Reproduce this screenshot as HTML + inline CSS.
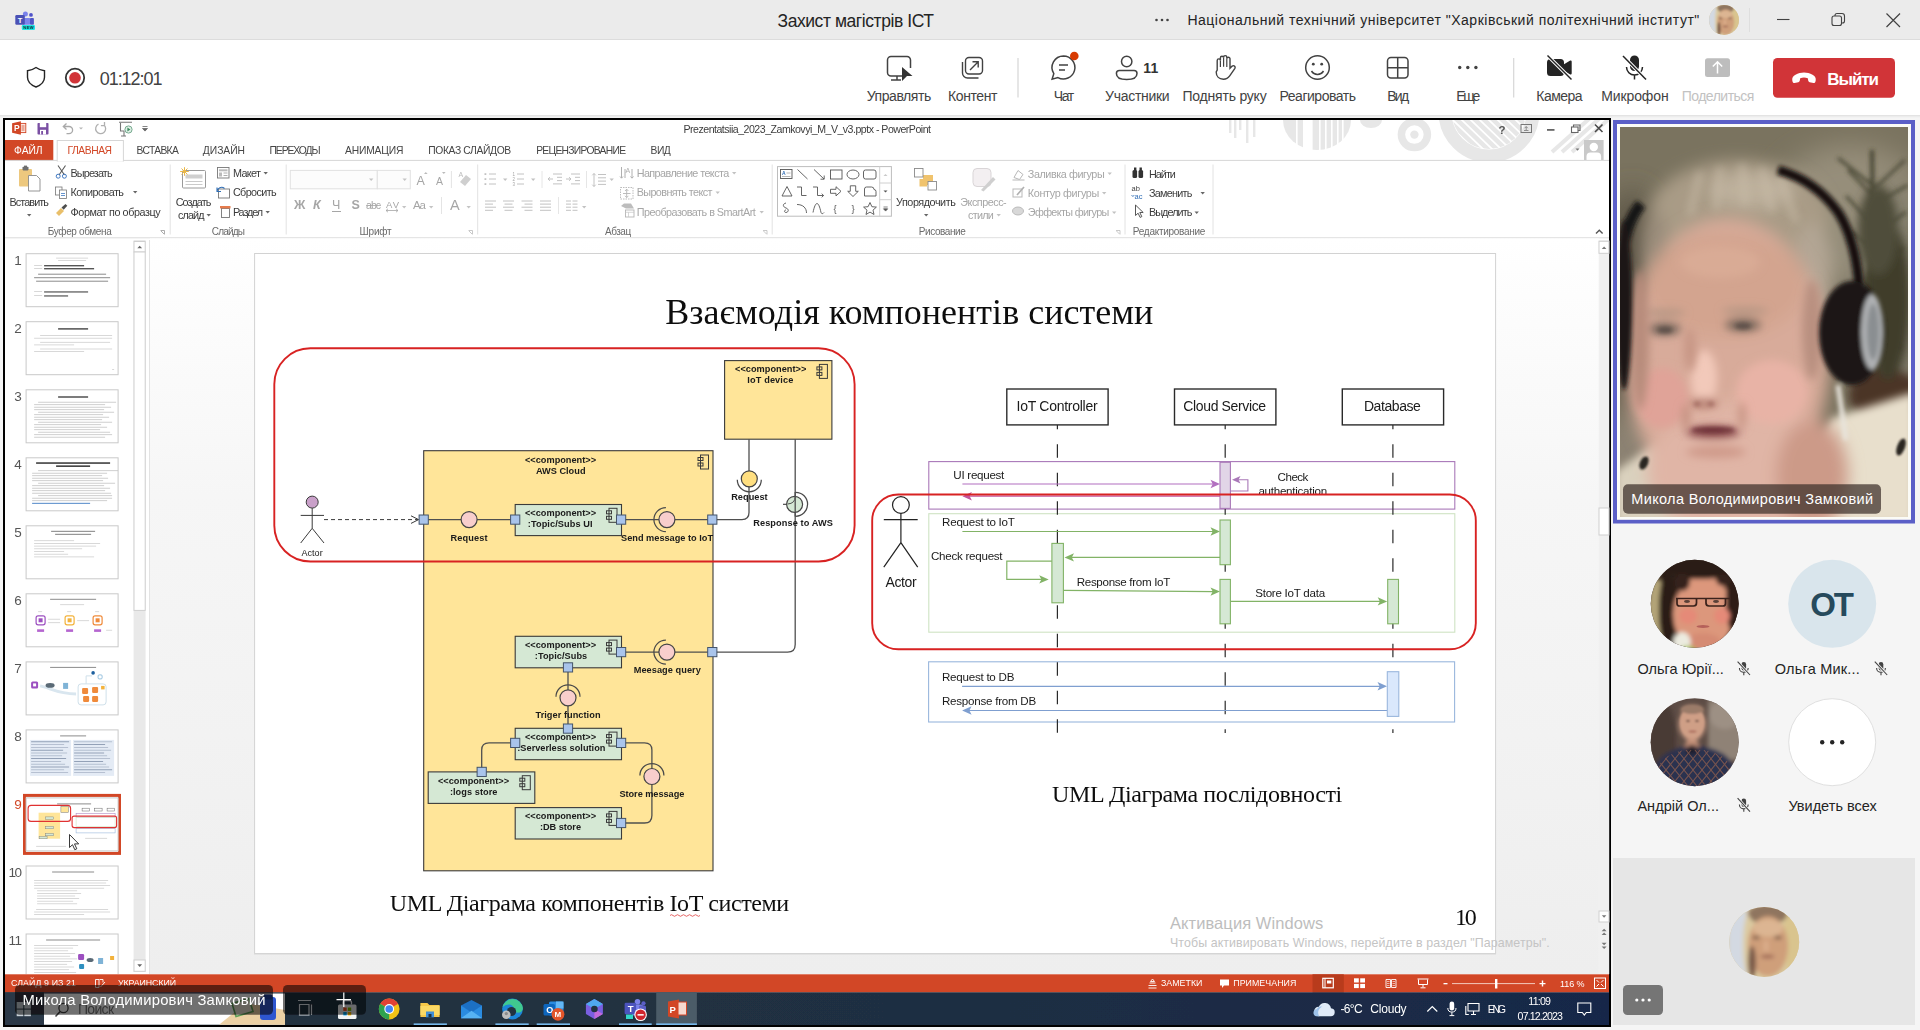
<!DOCTYPE html>
<html lang="uk"><head><meta charset="utf-8"><title>Захист магістрів ІСТ</title>
<style>
html,body{margin:0;padding:0;background:#f5f5f5;overflow:hidden}
svg{display:block;font-family:"Liberation Sans","Noto Sans CJK SC",sans-serif}
text{white-space:pre}
</style></head><body>
<svg width="1920" height="1030" viewBox="0 0 1920 1030">
<defs>
<filter id="b1" x="-20%" y="-20%" width="140%" height="140%"><feGaussianBlur stdDeviation="1"/></filter>
<filter id="b2" x="-20%" y="-20%" width="140%" height="140%"><feGaussianBlur stdDeviation="2"/></filter>
<filter id="b4" x="-20%" y="-20%" width="140%" height="140%"><feGaussianBlur stdDeviation="4"/></filter>
<filter id="b8" x="-30%" y="-30%" width="160%" height="160%"><feGaussianBlur stdDeviation="8"/></filter>
<filter id="b14" x="-40%" y="-40%" width="180%" height="180%"><feGaussianBlur stdDeviation="14"/></filter>
<filter id="b03" x="0" y="0" width="100%" height="100%"><feGaussianBlur stdDeviation="0.35"/></filter>
<filter id="b05" x="-5%" y="-5%" width="110%" height="110%"><feGaussianBlur stdDeviation="0.45"/></filter>
<clipPath id="cpHdr"><circle cx="1724" cy="20" r="15"/></clipPath>
<clipPath id="cpVid"><rect x="1620" y="127" width="288" height="390"/></clipPath>
<clipPath id="cpA1"><circle cx="1694.7" cy="603.8" r="44"/></clipPath>
<clipPath id="cpA3"><circle cx="1694.7" cy="742.2" r="44"/></clipPath>
<clipPath id="cpShirt"><ellipse cx="1694.5" cy="774" rx="38" ry="25"/></clipPath>
<clipPath id="cpRing"><circle cx="1489" cy="112" r="37"/></clipPath>
<clipPath id="cpDecor"><rect x="5" y="120" width="1604" height="40"/></clipPath>
<clipPath id="cpSelf"><circle cx="1764.2" cy="941.9" r="35"/></clipPath>
<clipPath id="cpShare"><rect x="5" y="120" width="1604" height="905"/></clipPath>
<clipPath id="cpThumbs"><rect x="5" y="240" width="145" height="734"/></clipPath>
</defs>
<g id="s1_teams">
<rect x="0.0" y="0.0" width="1920.0" height="1030.0" fill="#f5f5f5"/>
<rect x="0.0" y="0.0" width="1920.0" height="40.0" fill="#ebebeb"/>
<rect x="0.0" y="39.0" width="1920.0" height="1.0" fill="#dcdcdc"/>
<rect x="0.0" y="40.0" width="1920.0" height="75.0" fill="#ffffff"/>
<rect x="0.0" y="115.0" width="1920.0" height="1.0" fill="#e3e3e3"/>
<rect x="0.0" y="116.0" width="1920.0" height="1.0" fill="#ececec"/>
<rect x="0.0" y="117.0" width="1920.0" height="1.0" fill="#f2f2f2"/>
<g><circle cx="25.4" cy="14.1" r="2.5" fill="#7b83eb"/>
<circle cx="31.0" cy="14.9" r="1.9" fill="#4f52c9"/>
<rect x="23.0" y="18.1" width="7.2" height="6.6" fill="#7b83eb" rx="0.8"/>
<rect x="30.0" y="18.1" width="3.9" height="6.6" fill="#4f56c8" rx="0.8"/>
<rect x="15.3" y="15.0" width="9.5" height="9.7" fill="#4a51b5" rx="1.2"/>
<text x="17.8" y="22.8" fill="#ffffff" style="font-size:7.5px;font-weight:700;">T</text>
<rect x="21.8" y="25.1" width="13.2" height="4.8" fill="#20e6e6" rx="1.2"/>
<text x="23.2" y="29.1" fill="#06302f" style="font-size:4.2px;font-weight:700;" textLength="10.6" lengthAdjust="spacing">NEW</text>
</g><text x="777.5" y="26.7" fill="#242424" style="font-size:17.5px;" textLength="156.5" lengthAdjust="spacing">Захист магістрів ІСТ</text>
<circle cx="1156.5" cy="20.0" r="1.3" fill="#424242"/>
<circle cx="1162.0" cy="20.0" r="1.3" fill="#424242"/>
<circle cx="1167.5" cy="20.0" r="1.3" fill="#424242"/>
<text x="1187.4" y="24.5" fill="#242424" style="font-size:14px;" textLength="511.9" lengthAdjust="spacing">Національний технічний університет "Харківський політехнічний інститут"</text>
<line x1="1777.0" y1="19.5" x2="1789.5" y2="19.5" stroke="#424242" stroke-width="1.1"/>
<rect x="1832.0" y="16.0" width="9.5" height="9.5" fill="none" stroke="#424242" stroke-width="1.1" rx="2"/>
<path d="M1835 16 v-0.5 a2 2 0 0 1 2 -2 h5 a2.5 2.5 0 0 1 2.5 2.5 v5 a2 2 0 0 1 -2 2 h-1" fill="none" stroke="#424242" stroke-width="1.1"/>
<path d="M1886.5 13.5 L1900 27 M1900 13.5 L1886.5 27" fill="none" stroke="#424242" stroke-width="1.2"/>
<line x1="1749.5" y1="8.0" x2="1749.5" y2="32.0" stroke="#dedede" stroke-width="1"/>
<path d="M36 67.5 c3 2.2 5.5 3 8.5 3.2 v6.5 c0 5 -4 8 -8.5 9.8 c-4.5 -1.8 -8.5 -4.8 -8.5 -9.8 v-6.5 c3 -0.2 5.5 -1 8.5 -3.2 z" fill="none" stroke="#242424" stroke-width="1.4"/>
<circle cx="75.0" cy="77.8" r="9.2" fill="none" stroke="#333" stroke-width="1.8"/>
<circle cx="75.0" cy="77.8" r="5.8" fill="#d13438"/>
<text x="99.7" y="84.5" fill="#424242" style="font-size:18px;" textLength="62.8" lengthAdjust="spacing">01:12:01</text>
<text x="866.7" y="100.8" fill="#424242" style="font-size:14px;" textLength="64.6" lengthAdjust="spacing">Управлять</text>
<text x="948.0" y="100.8" fill="#424242" style="font-size:14px;" textLength="49.5" lengthAdjust="spacing">Контент</text>
<text x="1053.7" y="100.8" fill="#424242" style="font-size:14px;" textLength="20.5" lengthAdjust="spacing">Чат</text>
<text x="1105.0" y="100.8" fill="#424242" style="font-size:14px;" textLength="64.7" lengthAdjust="spacing">Участники</text>
<text x="1182.5" y="100.8" fill="#424242" style="font-size:14px;" textLength="84.2" lengthAdjust="spacing">Поднять руку</text>
<text x="1279.5" y="100.8" fill="#424242" style="font-size:14px;" textLength="76.5" lengthAdjust="spacing">Реагировать</text>
<text x="1387.2" y="100.8" fill="#424242" style="font-size:14px;" textLength="22.0" lengthAdjust="spacing">Вид</text>
<text x="1456.2" y="100.8" fill="#424242" style="font-size:14px;" textLength="24.1" lengthAdjust="spacing">Еще</text>
<text x="1536.3" y="100.8" fill="#424242" style="font-size:14px;" textLength="46.2" lengthAdjust="spacing">Камера</text>
<text x="1601.2" y="100.8" fill="#424242" style="font-size:14px;" textLength="67.5" lengthAdjust="spacing">Микрофон</text>
<text x="1681.7" y="100.8" fill="#c2c2c2" style="font-size:14px;" textLength="72.7" lengthAdjust="spacing">Поделиться</text>
<line x1="1018.0" y1="58.0" x2="1018.0" y2="97.5" stroke="#d6d6d6" stroke-width="1.2"/>
<line x1="1513.7" y1="58.0" x2="1513.7" y2="97.5" stroke="#d6d6d6" stroke-width="1.2"/>
<path d="M905 76 h-14 a3.5 3.5 0 0 1 -3.5 -3.5 v-12.5 a3.5 3.5 0 0 1 3.5 -3.5 h16 a3.5 3.5 0 0 1 3.5 3.5 v8" fill="none" stroke="#424242" stroke-width="1.5"/>
<path d="M897 76 v3.5 M891 80 h10" fill="none" stroke="#424242" stroke-width="1.5"/>
<path d="M902 67 l10.5 9 h-5.5 l-5 5 z" fill="#333"/>
<rect x="965.5" y="57.5" width="17.0" height="16.5" fill="none" stroke="#424242" stroke-width="1.4" rx="3.5"/>
<path d="M962.5 62 v11 a5 5 0 0 0 5 5 h11" fill="none" stroke="#424242" stroke-width="1.4"/>
<path d="M970 70 l8 -8 M972.5 61.8 h5.7 v5.7" fill="none" stroke="#424242" stroke-width="1.4"/>
<path d="M1063.5 56 a11.5 11.5 0 1 1 -5.6 21.6 l-5.8 1.6 l1.7 -5.6 a11.5 11.5 0 0 1 9.7 -17.6 z" fill="none" stroke="#424242" stroke-width="1.5"/>
<path d="M1059 65 h9 M1059 70 h6" fill="none" stroke="#424242" stroke-width="1.5"/>
<circle cx="1074.3" cy="56.0" r="4.3" fill="#d83b01"/>
<circle cx="1126.7" cy="61.5" r="5.2" fill="none" stroke="#424242" stroke-width="1.5"/>
<path d="M1119.5 70.5 h14.5 a3 3 0 0 1 3 3 c0 4 -4 6 -10.3 6 c-6.3 0 -10.3 -2 -10.3 -6 a3 3 0 0 1 3 -3 z" fill="none" stroke="#424242" stroke-width="1.5"/>
<text x="1143.3" y="72.6" fill="#333" style="font-size:14px;font-weight:700;" textLength="15.0" lengthAdjust="spacing">11</text>
<path d="M1217.2 70 v-9.5 a1.6 1.6 0 0 1 3.2 0 v-2.7 a1.6 1.6 0 0 1 3.2 0 v-0.6 a1.6 1.6 0 0 1 3.2 0 v1.6 a1.6 1.6 0 0 1 3.2 0 v9.5 l2.2 -2.2 a1.8 1.8 0 0 1 2.7 2.3 l-5.2 7.5 c-1.6 2.3 -3.6 3.3 -6.3 3.3 c-4.2 0 -7.2 -2.6 -7.2 -7.2 z" fill="none" stroke="#424242" stroke-width="1.4"/>
<path d="M1220.4 60.5 v6.5 M1223.6 57.8 v9 M1226.8 58.8 v8.2" fill="none" stroke="#424242" stroke-width="1.2"/>
<circle cx="1317.5" cy="67.5" r="11.8" fill="none" stroke="#424242" stroke-width="1.5"/>
<circle cx="1313.3" cy="64.2" r="1.4" fill="#424242"/>
<circle cx="1321.7" cy="64.2" r="1.4" fill="#424242"/>
<path d="M1311.5 71 a7 7 0 0 0 12 0" fill="none" stroke="#424242" stroke-width="1.5"/>
<rect x="1387.5" y="57.5" width="20.5" height="20.5" fill="none" stroke="#424242" stroke-width="1.5" rx="3.5"/>
<path d="M1397.7 57.5 v20.5 M1387.5 67.7 h20.5" fill="none" stroke="#424242" stroke-width="1.5"/>
<circle cx="1459.7" cy="67.5" r="1.7" fill="#424242"/>
<circle cx="1467.8" cy="67.5" r="1.7" fill="#424242"/>
<circle cx="1475.9" cy="67.5" r="1.7" fill="#424242"/>
<path d="M1550.5 59 h10 a3.5 3.5 0 0 1 3.5 3.5 v1.8 l5.8 -3.6 a1.2 1.2 0 0 1 1.9 1 v11.6 a1.2 1.2 0 0 1 -1.9 1 l-5.8 -3.6 v1.8 a3.5 3.5 0 0 1 -3.5 3.5 h-10 a3.5 3.5 0 0 1 -3.5 -3.5 v-10 a3.5 3.5 0 0 1 3.5 -3.5 z" fill="#242424"/>
<path d="M1547.5 55.5 L1571.5 79.5" fill="none" stroke="#fff" stroke-width="3.4"/>
<path d="M1547.5 55.5 L1571.5 79.5" fill="none" stroke="#242424" stroke-width="1.5"/>
<rect x="1630.0" y="55.5" width="9.0" height="15.5" fill="#242424" rx="4.5"/>
<path d="M1626.5 67 a8 8 0 0 0 16 0 M1634.5 75 v4.5" fill="none" stroke="#242424" stroke-width="1.5"/>
<path d="M1623 56 L1646 79.5" fill="none" stroke="#fff" stroke-width="3.4"/>
<path d="M1623 56 L1646 79.5" fill="none" stroke="#242424" stroke-width="1.5"/>
<rect x="1705.0" y="58.2" width="25.0" height="18.7" fill="#bdbdbd" rx="2.5"/>
<path d="M1717.5 73.5 v-11.5 M1712.8 66.5 l4.7 -4.7 l4.7 4.7" fill="none" stroke="#fff" stroke-width="1.5"/>
<rect x="1773.0" y="58.0" width="122.0" height="39.8" fill="#d13438" rx="4.5"/>
<path d="M1792.3 80.5 c-0.6 -2.6 1 -4.6 3.2 -5.8 c5.3 -2.8 11.7 -2.8 17 0 c2.2 1.2 3.8 3.2 3.2 5.8 l-0.3 1.2 c-0.2 0.9 -1.1 1.5 -2 1.3 l-3.7 -0.8 c-0.8 -0.2 -1.4 -0.8 -1.5 -1.6 l-0.4 -2.4 c-2.5 -0.9 -5.1 -0.9 -7.6 0 l-0.4 2.4 c-0.1 0.8 -0.7 1.4 -1.5 1.6 l-3.7 0.8 c-0.9 0.2 -1.8 -0.4 -2 -1.3 z" fill="#fff"/>
<text x="1827.2" y="84.6" fill="#ffffff" style="font-size:17px;font-weight:700;" textLength="51.8" lengthAdjust="spacing">Выйти</text>
<g clip-path="url(#cpHdr)">
<rect x="1708.0" y="4.0" width="32.0" height="32.0" fill="#d9c79c"/>
<g filter="url(#b1)">
<rect x="1708.0" y="4.0" width="7.8" height="32.0" fill="#d3d9e2"/>
<ellipse cx="1725.7" cy="8.4" rx="8.5" ry="4.3" fill="#8f755e"/>
<ellipse cx="1717.2" cy="21.6" rx="2.1" ry="12.8" fill="#dccba2"/>
<ellipse cx="1735.9" cy="19.5" rx="3.8" ry="12.8" fill="#d9c48e"/>
<ellipse cx="1725.7" cy="22.0" rx="8.5" ry="12.8" fill="#cf9f7a"/>
<ellipse cx="1725.7" cy="14.4" rx="6.4" ry="3.8" fill="#dcb592"/>
<ellipse cx="1718.9" cy="28.9" rx="1.7" ry="6.8" fill="#7a5a48"/>
<ellipse cx="1720.6" cy="18.4" rx="1.7" ry="0.8" fill="#7d5e4c"/>
<ellipse cx="1730.0" cy="18.4" rx="1.7" ry="0.8" fill="#7d5e4c"/>
<ellipse cx="1725.5" cy="26.5" rx="3.0" ry="0.8" fill="#9a6452"/>
<ellipse cx="1724.9" cy="22.0" rx="1.1" ry="2.6" fill="#dcae8c"/>
</g>
</g>
</g>
<g id="s2_right">
<rect x="1613.0" y="120.0" width="302.0" height="403.5" fill="#5b5fc7"/>
<rect x="1617.0" y="124.0" width="294.0" height="395.8" fill="#fbfbf6"/>
<g clip-path="url(#cpVid)">
<rect x="1620.0" y="127.0" width="288.0" height="390.0" fill="#7a735f"/>
<g filter="url(#b14)">
<ellipse cx="1850" cy="215" rx="80" ry="70" fill="#968e7a"/>
<ellipse cx="1632" cy="300" rx="30" ry="110" fill="#5a5245"/>
<ellipse cx="1640" cy="470" rx="50" ry="60" fill="#8c8272"/>
<ellipse cx="1890" cy="300" rx="30" ry="120" fill="#7c7868"/>
</g>
<g filter="url(#b2)" opacity="0.9">
<path d="M1872 150 L1874 300" fill="none" stroke="#3d3c2a" stroke-width="4"/>
<path d="M1872 185 L1838 158 M1872 195 L1848 170 M1873 190 L1905 160 M1873 205 L1908 185 M1873 225 L1846 196 M1873 235 L1906 212 M1874 250 L1852 232 M1874 262 L1904 248" fill="none" stroke="#454431" stroke-width="3"/>
<path d="M1874 250 L1864 310 M1874 250 L1884 330 M1876 260 L1898 350 M1874 270 L1878 380" fill="none" stroke="#45442f" stroke-width="7"/>
</g>
<g filter="url(#b4)">
<ellipse cx="1885" cy="395" rx="36" ry="26" fill="#4c3427"/>
<ellipse cx="1888" cy="300" rx="22" ry="80" fill="#3f3d2c"/>
<ellipse cx="1878" cy="230" rx="20" ry="45" fill="#504e3a"/>
</g>
<g filter="url(#b4)">
<path d="M1832 418 L1915 392 L1915 525 L1760 525 Z" fill="#e8dfcc"/>
<path d="M1615 472 L1662 438 L1705 525 L1615 525 Z" fill="#dad1be"/>
</g>
<g filter="url(#b8)">
<ellipse cx="1738" cy="218" rx="90" ry="58" fill="#a99b86"/>
<ellipse cx="1752" cy="190" rx="42" ry="18" fill="#bdb09c"/>
<ellipse cx="1812" cy="275" rx="20" ry="52" fill="#b3a694"/>
<ellipse cx="1655" cy="250" rx="14" ry="40" fill="#9a8c7a"/>
</g>
<g filter="url(#b8)">
<ellipse cx="1727" cy="360" rx="102" ry="142" fill="#d8ab9a"/>
<ellipse cx="1725" cy="285" rx="80" ry="52" fill="#d3a48f"/>
<ellipse cx="1745" cy="470" rx="98" ry="70" fill="#e0b5a6"/>
<ellipse cx="1812" cy="475" rx="36" ry="55" fill="#cc9a88"/>
</g>
<g filter="url(#b4)">
<ellipse cx="1662" cy="398" rx="26" ry="30" fill="#e0a398"/>
<ellipse cx="1772" cy="392" rx="36" ry="32" fill="#e8b3a6"/>
<ellipse cx="1704" cy="378" rx="13" ry="28" fill="#f2c9ba"/>
<ellipse cx="1720" cy="262" rx="40" ry="16" fill="#d9ab95"/>
<ellipse cx="1664" cy="329" rx="17" ry="6.5" fill="#7d6a5e"/>
<ellipse cx="1743" cy="325" rx="18" ry="6.5" fill="#7d6a5e"/>
<ellipse cx="1664" cy="313" rx="21" ry="3.5" fill="#b39482"/>
<ellipse cx="1745" cy="311" rx="23" ry="3.5" fill="#b39482"/>
<ellipse cx="1713" cy="432" rx="27" ry="6" fill="#86464a"/>
<ellipse cx="1704" cy="403" rx="14" ry="5" fill="#b47c6e"/>
<ellipse cx="1716" cy="452" rx="30" ry="6" fill="#cf9a8a"/>
</g>
<g filter="url(#b4)">
<ellipse cx="1640" cy="340" rx="9" ry="70" fill="#b88c7c"/>
<ellipse cx="1812" cy="330" rx="10" ry="50" fill="#b99080"/>
<ellipse cx="1690" cy="350" rx="6" ry="22" fill="#c79685"/>
<ellipse cx="1686" cy="418" rx="4" ry="14" fill="#c48f80"/>
<ellipse cx="1742" cy="416" rx="4" ry="14" fill="#c99585"/>
</g>
<g filter="url(#b2)">
<ellipse cx="1665" cy="330" rx="8" ry="3.2" fill="#5d5048"/>
<ellipse cx="1743" cy="326" rx="8.5" ry="3.2" fill="#5d5048"/>
<ellipse cx="1697" cy="404" rx="3" ry="2" fill="#9a6258"/>
<ellipse cx="1711" cy="404" rx="3" ry="2" fill="#9a6258"/>
<ellipse cx="1713" cy="430" rx="22" ry="3" fill="#6e3038"/>
</g>
<g filter="url(#b4)" opacity="0.8">
<path d="M1700 172 L1690 215 M1720 167 L1716 210 M1742 164 L1745 205 M1762 168 L1772 212 M1780 177 L1796 222" fill="none" stroke="#c8bca8" stroke-width="5"/>
</g>
<g filter="url(#b2)">
<path d="M1778 170 C1800 176 1822 190 1838 212 C1851 232 1858 262 1860 296" fill="none" stroke="#14110e" stroke-width="9.5"/>
<path d="M1641 204 C1624 224 1619 258 1622 300" fill="none" stroke="#191512" stroke-width="11"/>
<ellipse cx="1624" cy="305" rx="8" ry="85" fill="#1b1714"/>
<ellipse cx="1852" cy="333" rx="33" ry="52" fill="#1a1715"/>
<ellipse cx="1872" cy="332" rx="11" ry="38" fill="#aeb0b2"/>
<ellipse cx="1873" cy="332" rx="6" ry="28" fill="#8a8e91"/>
<path d="M1838 385 L1846 440" fill="none" stroke="#e8e4dc" stroke-width="5"/>
</g>
<g filter="url(#b1)">
<ellipse cx="1644" cy="463" rx="4" ry="7" fill="#2a2622" transform="rotate(25 1644 463)"/>
<ellipse cx="1901" cy="447" rx="4" ry="9" fill="#2a2622" transform="rotate(20 1901 447)"/>
</g>
</g>
<rect x="1623.0" y="484.2" width="258.0" height="29.6" fill="#3c2f2a" rx="5" fill-opacity="0.72"/>
<text x="1631.3" y="504.2" fill="#ffffff" style="font-size:14.5px;" textLength="241.7" lengthAdjust="spacing">Микола Володимирович Замковий</text>
<g clip-path="url(#cpA1)">
<rect x="1650.0" y="559.0" width="90.0" height="90.0" fill="#2e1f17"/>
<g filter="url(#b2)">
<ellipse cx="1657" cy="612" rx="9" ry="34" fill="#b3a478"/>
<ellipse cx="1668" cy="610" rx="9" ry="40" fill="#2a1b14"/>
<ellipse cx="1703" cy="614" rx="30" ry="39" fill="#dc977c"/>
<ellipse cx="1700" cy="568" rx="36" ry="11" fill="#2b1c15"/>
<ellipse cx="1734" cy="600" rx="8" ry="34" fill="#2d1d16"/>
<ellipse cx="1682" cy="582" rx="8" ry="9" fill="#34221a"/>
<ellipse cx="1724" cy="580" rx="8" ry="6" fill="#34221a"/>
<ellipse cx="1688" cy="616" rx="9" ry="8" fill="#e58a78"/>
<ellipse cx="1722" cy="616" rx="8" ry="8" fill="#e58a78"/>
<ellipse cx="1703" cy="642" rx="18" ry="9" fill="#d58b73"/>
<ellipse cx="1682" cy="642" rx="9" ry="10" fill="#ecebe0"/>
<ellipse cx="1688" cy="650" rx="8" ry="4" fill="#a4c24a"/>
</g>
<g filter="url(#b05)">
<path d="M1676 598.5 H1731 M1677 598.5 v5 q0 2.5 2.5 2.5 h14 q3 0 3 -3 v-4.5 M1706 598.5 v4.5 q0 3 3 3 h14 q2.5 0 2.5 -2.5 v-5" fill="none" stroke="#3a221c" stroke-width="1.7"/>
<ellipse cx="1687" cy="601.5" rx="3" ry="1.4" fill="#5a4038"/>
<ellipse cx="1716" cy="601.5" rx="3" ry="1.4" fill="#5a4038"/>
<ellipse cx="1703" cy="626.5" rx="6.5" ry="1.5" fill="#b5605a"/>
</g>
</g>
<circle cx="1832.2" cy="603.8" r="44.0" fill="#d9e5ec"/>
<text x="1810.3" y="615.5" fill="#264a5c" style="font-size:33px;font-weight:700;" textLength="43.7" lengthAdjust="spacing">ОТ</text>
<g clip-path="url(#cpA3)">
<rect x="1650.0" y="698.0" width="90.0" height="90.0" fill="#5d4c45"/>
<g filter="url(#b2)">
<ellipse cx="1662" cy="740" rx="14" ry="40" fill="#4a3a35"/>
<rect x="1708.0" y="700.0" width="40.0" height="60.0" fill="#8f8276"/>
<ellipse cx="1725" cy="715" rx="16" ry="14" fill="#9d9084"/>
<ellipse cx="1694.5" cy="772" rx="40" ry="26" fill="#2c3150"/>
<ellipse cx="1692.2" cy="724" rx="13" ry="17" fill="#cf9f86"/>
<ellipse cx="1692.2" cy="710.5" rx="12" ry="6" fill="#9b7b69"/>
<ellipse cx="1692" cy="745" rx="7" ry="6" fill="#c39078"/>
<ellipse cx="1692" cy="750" rx="6" ry="5" fill="#1d1f2c"/>
</g>
<g clip-path="url(#cpShirt)"><g filter="url(#b05)" stroke="#b9714f" stroke-width="1.1" opacity="0.55">
<line x1="1632" y1="750" x2="1664" y2="790"/>
<line x1="1664" y1="750" x2="1632" y2="790"/>
<line x1="1641" y1="750" x2="1673" y2="790"/>
<line x1="1673" y1="750" x2="1641" y2="790"/>
<line x1="1650" y1="750" x2="1682" y2="790"/>
<line x1="1682" y1="750" x2="1650" y2="790"/>
<line x1="1659" y1="750" x2="1691" y2="790"/>
<line x1="1691" y1="750" x2="1659" y2="790"/>
<line x1="1668" y1="750" x2="1700" y2="790"/>
<line x1="1700" y1="750" x2="1668" y2="790"/>
<line x1="1677" y1="750" x2="1709" y2="790"/>
<line x1="1709" y1="750" x2="1677" y2="790"/>
<line x1="1686" y1="750" x2="1718" y2="790"/>
<line x1="1718" y1="750" x2="1686" y2="790"/>
<line x1="1695" y1="750" x2="1727" y2="790"/>
<line x1="1727" y1="750" x2="1695" y2="790"/>
<line x1="1704" y1="750" x2="1736" y2="790"/>
<line x1="1736" y1="750" x2="1704" y2="790"/>
<line x1="1713" y1="750" x2="1745" y2="790"/>
<line x1="1745" y1="750" x2="1713" y2="790"/>
<line x1="1722" y1="750" x2="1754" y2="790"/>
<line x1="1754" y1="750" x2="1722" y2="790"/>
</g></g>
<g filter="url(#b1)"><ellipse cx="1692.2" cy="722" rx="12" ry="15" fill="#cf9f86"/>
<ellipse cx="1692.2" cy="709.5" rx="11" ry="4.5" fill="#9b7b69"/>
<ellipse cx="1688" cy="721" rx="1.8" ry="0.9" fill="#5a4038"/>
<ellipse cx="1697" cy="721" rx="1.8" ry="0.9" fill="#5a4038"/>
<ellipse cx="1692.5" cy="731.5" rx="4" ry="1" fill="#a8675a"/>
</g>
</g>
<circle cx="1832.2" cy="742.2" r="43.5" fill="#ffffff" stroke="#e0e0e0" stroke-width="1"/>
<circle cx="1822.2" cy="742.2" r="2.2" fill="#242424"/>
<circle cx="1832.2" cy="742.2" r="2.2" fill="#242424"/>
<circle cx="1842.2" cy="742.2" r="2.2" fill="#242424"/>
<text x="1637.4" y="674.2" fill="#242424" style="font-size:14.5px;" textLength="86.4" lengthAdjust="spacing">Ольга Юрії...</text>
<text x="1774.8" y="674.2" fill="#242424" style="font-size:14.5px;" textLength="85.0" lengthAdjust="spacing">Ольга Мик...</text>
<text x="1637.4" y="810.7" fill="#242424" style="font-size:14.5px;" textLength="81.6" lengthAdjust="spacing">Андрій Ол...</text>
<text x="1788.4" y="810.7" fill="#242424" style="font-size:14.5px;" textLength="88.4" lengthAdjust="spacing">Увидеть всех</text>
<rect x="1741.5" y="661.9" width="4.6" height="8.6" fill="#424242" rx="2.3"/>
<path d="M1739.3999999999999 667.9 a4.4 4.4 0 0 0 8.8 0 M1743.8 672.4 v2.8" fill="none" stroke="#424242" stroke-width="1.1"/>
<path d="M1737.6 661.6 L1750.0 675.0" fill="none" stroke="#f5f5f5" stroke-width="2.6"/>
<path d="M1737.6 661.6 L1750.0 675.0" fill="none" stroke="#424242" stroke-width="1.1"/>
<rect x="1878.7" y="661.9" width="4.6" height="8.6" fill="#424242" rx="2.3"/>
<path d="M1876.6 667.9 a4.4 4.4 0 0 0 8.8 0 M1881 672.4 v2.8" fill="none" stroke="#424242" stroke-width="1.1"/>
<path d="M1874.8 661.6 L1887.2 675.0" fill="none" stroke="#f5f5f5" stroke-width="2.6"/>
<path d="M1874.8 661.6 L1887.2 675.0" fill="none" stroke="#424242" stroke-width="1.1"/>
<rect x="1741.5" y="798.5" width="4.6" height="8.6" fill="#424242" rx="2.3"/>
<path d="M1739.3999999999999 804.5 a4.4 4.4 0 0 0 8.8 0 M1743.8 809 v2.8" fill="none" stroke="#424242" stroke-width="1.1"/>
<path d="M1737.6 798.2 L1750.0 811.6" fill="none" stroke="#f5f5f5" stroke-width="2.6"/>
<path d="M1737.6 798.2 L1750.0 811.6" fill="none" stroke="#424242" stroke-width="1.1"/>
<rect x="1613.0" y="858.0" width="302.0" height="167.0" fill="#e6e6e6"/>
<g clip-path="url(#cpSelf)">
<rect x="1727.8" y="905.0" width="72.4" height="72.4" fill="#d9c79c"/>
<g filter="url(#b2)">
<rect x="1727.8" y="905.0" width="18.3" height="72.4" fill="#d3d9e2"/>
<ellipse cx="1768.0" cy="914.0" rx="20.0" ry="10.0" fill="#8f755e"/>
<ellipse cx="1748.0" cy="945.0" rx="5.0" ry="30.0" fill="#dccba2"/>
<ellipse cx="1792.0" cy="940.0" rx="9.0" ry="30.0" fill="#d9c48e"/>
<ellipse cx="1768.0" cy="946.0" rx="20.0" ry="30.0" fill="#cf9f7a"/>
<ellipse cx="1768.0" cy="928.0" rx="15.0" ry="9.0" fill="#dcb592"/>
<ellipse cx="1752.0" cy="962.0" rx="4.0" ry="16.0" fill="#7a5a48"/>
<ellipse cx="1756.0" cy="937.5" rx="4.0" ry="1.8" fill="#7d5e4c"/>
<ellipse cx="1778.0" cy="937.5" rx="4.0" ry="1.8" fill="#7d5e4c"/>
<ellipse cx="1767.5" cy="956.5" rx="7.0" ry="1.8" fill="#9a6452"/>
<ellipse cx="1766.0" cy="946.0" rx="2.5" ry="6.0" fill="#dcae8c"/>
</g>
</g>
<rect x="1623.0" y="985.0" width="40.0" height="30.0" fill="#757575" rx="4.5"/>
<circle cx="1636.8" cy="1000.0" r="1.6" fill="#ffffff"/>
<circle cx="1643.0" cy="1000.0" r="1.6" fill="#ffffff"/>
<circle cx="1649.2" cy="1000.0" r="1.6" fill="#ffffff"/>
</g>
<g id="s3_ppt" filter="url(#b03)">
<rect x="3.0" y="118.0" width="1608.0" height="909.0" fill="#000000"/>
<rect x="5.0" y="120.0" width="1604.0" height="905.0" fill="#ffffff"/>
<g clip-path="url(#cpDecor)">
<rect x="1229.0" y="118.0" width="2.4" height="15.0" fill="#e7e7e7"/>
<rect x="1234.0" y="118.0" width="2.4" height="20.0" fill="#e7e7e7"/>
<rect x="1239.0" y="118.0" width="2.4" height="12.0" fill="#e7e7e7"/>
<rect x="1246.0" y="118.0" width="2.4" height="25.0" fill="#e7e7e7"/>
<rect x="1253.0" y="118.0" width="2.4" height="19.0" fill="#e7e7e7"/>
<path d="M1283 120 A34 30 0 0 0 1351 120 Z" fill="#e7e7e7"/>
<rect x="1296.0" y="118.0" width="1.6" height="32.0" fill="#ffffff"/>
<rect x="1303.0" y="118.0" width="1.6" height="32.0" fill="#ffffff"/>
<rect x="1311.0" y="118.0" width="1.6" height="32.0" fill="#ffffff"/>
<rect x="1319.0" y="118.0" width="1.6" height="32.0" fill="#ffffff"/>
<rect x="1325.0" y="118.0" width="1.6" height="32.0" fill="#ffffff"/>
<rect x="1331.0" y="118.0" width="1.6" height="32.0" fill="#ffffff"/>
<rect x="1337.0" y="118.0" width="1.6" height="32.0" fill="#ffffff"/>
<rect x="1342.0" y="118.0" width="1.6" height="32.0" fill="#ffffff"/>
<rect x="1303.0" y="118.0" width="8.0" height="32.0" fill="#fff"/>
<path d="M1360 120 A11 8 0 0 0 1382 120 Z" fill="#e7e7e7"/>
<circle cx="1414.4" cy="134.6" r="13.0" fill="none" stroke="#e7e7e7" stroke-width="7.5"/>
<circle cx="1414.4" cy="134.6" r="4.2" fill="#e7e7e7"/>
<circle cx="1489.0" cy="112.0" r="44.0" fill="none" stroke="#e7e7e7" stroke-width="13"/>
<g clip-path="url(#cpRing)" stroke="#e7e7e7" stroke-width="4.5"><line x1="1422" y1="112" x2="1472" y2="160"/><line x1="1431" y1="112" x2="1481" y2="160"/><line x1="1440" y1="112" x2="1490" y2="160"/><line x1="1449" y1="112" x2="1499" y2="160"/><line x1="1458" y1="112" x2="1508" y2="160"/><line x1="1467" y1="112" x2="1517" y2="160"/><line x1="1476" y1="112" x2="1526" y2="160"/><line x1="1485" y1="112" x2="1535" y2="160"/><line x1="1494" y1="112" x2="1544" y2="160"/><line x1="1503" y1="112" x2="1553" y2="160"/><line x1="1512" y1="112" x2="1562" y2="160"/></g>
<g stroke="#e7e7e7" stroke-width="4"><line x1="1552" y1="152" x2="1590" y2="118"/><line x1="1562" y1="152" x2="1600" y2="118"/><line x1="1572" y1="152" x2="1610" y2="118"/></g>
</g>
<rect x="19.5" y="123.4" width="6.3" height="9.2" fill="#fbe9e3" stroke="#d24726" stroke-width="0.9"/>
<path d="M21.5 126 h3 M21.5 128 h3 M21.5 130 h3" fill="none" stroke="#d24726" stroke-width="0.8"/>
<path d="M12.1 123.2 l8.8 -1.9 v13.4 l-8.8 -1.9 z" fill="#d24726"/>
<text x="14.0" y="131.3" fill="#ffffff" style="font-size:8.5px;font-weight:700;">P</text>
<rect x="37.5" y="123.0" width="11.0" height="11.5" fill="#7a4fa3" rx="0.8"/>
<rect x="39.8" y="123.0" width="6.4" height="4.2" fill="#ffffff"/>
<rect x="40.0" y="129.8" width="6.0" height="4.7" fill="#ffffff"/>
<rect x="41.2" y="131.0" width="1.8" height="3.5" fill="#7a4fa3"/>
<path d="M63.5 126.5 h5.5 a3.6 3.6 0 0 1 0 7.2 h-2.5 M66.5 123.5 l-3.2 3 l3.2 3" fill="none" stroke="#a9a9a9" stroke-width="1.3"/>
<path d="M79 127.5 l2 2 l2 -2 z" fill="#b5b5b5"/>
<path d="M104 125 a5 5 0 1 1 -5.5 -0.8 M104.5 122 v3.6 h-3.6" fill="none" stroke="#b0b0b0" stroke-width="1.3"/>
<path d="M119 122.3 h13 M120.5 123 v8 h4 M126 136 h-5 M124 131.5 v4" fill="none" stroke="#777" stroke-width="1.1"/>
<circle cx="128.5" cy="129.5" r="3.6" fill="#dff0e6" stroke="#6aa284" stroke-width="0.9"/>
<path d="M127.4 127.6 l3 1.9 l-3 1.9 z" fill="#3d8a5f"/>
<path d="M142.5 126.5 h5 M142.5 128.5 l2.5 2.6 l2.5 -2.6 z" fill="#666" stroke="#666" stroke-width="0.8"/>
<text x="683.5" y="133.2" fill="#3d3d3d" style="font-size:10.6px;" textLength="247.5" lengthAdjust="spacing">Prezentatsiia_2023_Zamkovyi_M_V_v3.pptx - PowerPoint</text>
<text x="1498.5" y="133.5" fill="#555" style="font-size:11.5px;font-weight:700;">?</text>
<rect x="1521.0" y="124.5" width="10.5" height="8.0" fill="none" stroke="#777" stroke-width="1"/>
<path d="M1524 130.5 h4.5 M1526.2 130 v-3.3 M1524.6 128.2 l1.6 -1.7 l1.6 1.7" fill="none" stroke="#777" stroke-width="0.8"/>
<rect x="1547.0" y="129.0" width="7.5" height="1.8" fill="#666"/>
<rect x="1571.5" y="127.0" width="6.5" height="5.5" fill="#fff" stroke="#666" stroke-width="1.1"/>
<path d="M1573.5 127 v-2 h6.5 v5.5 h-2" fill="none" stroke="#666" stroke-width="1.1"/>
<path d="M1595 124.5 l7.5 7.5 M1602.5 124.5 l-7.5 7.5" fill="none" stroke="#4a4a4a" stroke-width="1.6"/>
<path d="M1575.5 148.5 l2 2.2 l2 -2.2 z" fill="#777"/>
<rect x="1584.0" y="140.0" width="19.6" height="20.0" fill="#c9c9c9"/>
<circle cx="1593.8" cy="147.0" r="4.2" fill="#ffffff"/>
<path d="M1586.5 160 v-3.5 a4 4 0 0 1 4 -4 h6.6 a4 4 0 0 1 4 4 v3.5 z" fill="#ffffff"/>
<rect x="5.0" y="140.0" width="48.3" height="20.4" fill="#d24726"/>
<text x="14.1" y="154.0" fill="#ffffff" style="font-size:10.3px;" textLength="28.5" lengthAdjust="spacing">ФАЙЛ</text>
<line x1="5.0" y1="160.4" x2="1609.0" y2="160.4" stroke="#d6d6d6" stroke-width="1"/>
<rect x="57.2" y="140.5" width="66.2" height="20.5" fill="#ffffff" stroke="#d6d6d6" stroke-width="1"/>
<rect x="57.8" y="159.5" width="65.0" height="2.0" fill="#ffffff"/>
<text x="67.5" y="154.0" fill="#d24726" style="font-size:10.3px;" textLength="44.5" lengthAdjust="spacing">ГЛАВНАЯ</text>
<text x="136.6" y="154.0" fill="#444" style="font-size:10.3px;" textLength="42.2" lengthAdjust="spacing">ВСТАВКА</text>
<text x="202.8" y="154.0" fill="#444" style="font-size:10.3px;" textLength="42.2" lengthAdjust="spacing">ДИЗАЙН</text>
<text x="269.5" y="154.0" fill="#444" style="font-size:10.3px;" textLength="51.0" lengthAdjust="spacing">ПЕРЕХОДЫ</text>
<text x="345.0" y="154.0" fill="#444" style="font-size:10.3px;" textLength="58.4" lengthAdjust="spacing">АНИМАЦИЯ</text>
<text x="428.2" y="154.0" fill="#444" style="font-size:10.3px;" textLength="83.0" lengthAdjust="spacing">ПОКАЗ СЛАЙДОВ</text>
<text x="536.2" y="154.0" fill="#444" style="font-size:10.3px;" textLength="89.8" lengthAdjust="spacing">РЕЦЕНЗИРОВАНИЕ</text>
<text x="650.5" y="154.0" fill="#444" style="font-size:10.3px;" textLength="20.3" lengthAdjust="spacing">ВИД</text>
<line x1="5.0" y1="237.8" x2="1609.0" y2="237.8" stroke="#dadada" stroke-width="1"/>
<line x1="170.2" y1="164.5" x2="170.2" y2="234.5" stroke="#e2e2e2" stroke-width="1"/>
<line x1="286.2" y1="164.5" x2="286.2" y2="234.5" stroke="#e2e2e2" stroke-width="1"/>
<line x1="477.7" y1="164.5" x2="477.7" y2="234.5" stroke="#e2e2e2" stroke-width="1"/>
<line x1="772.2" y1="164.5" x2="772.2" y2="234.5" stroke="#e2e2e2" stroke-width="1"/>
<line x1="1125.0" y1="164.5" x2="1125.0" y2="234.5" stroke="#e2e2e2" stroke-width="1"/>
<line x1="1213.0" y1="164.5" x2="1213.0" y2="234.5" stroke="#e2e2e2" stroke-width="1"/>
<rect x="19.0" y="169.0" width="13.0" height="17.5" fill="#edc87e" rx="1"/>
<rect x="22.5" y="166.8" width="6.0" height="3.6" fill="#6e6e6e" rx="0.8"/>
<rect x="24.0" y="165.6" width="3.0" height="2.0" fill="#6e6e6e"/>
<path d="M28.5 175.5 h8 l3.5 3.5 v12 h-11.5 z" fill="#ffffff" stroke="#8a8a8a" stroke-width="0.9"/>
<text x="9.5" y="205.7" fill="#3b3b3b" style="font-size:10.8px;" textLength="39.5" lengthAdjust="spacing">Вставить</text>
<path d="M27 214 h4.4 l-2.2 2.4 z" fill="#666"/>
<path d="M58 165.5 l6.5 9.5 M65.5 165.5 l-6.5 9.5" fill="none" stroke="#5a5a5a" stroke-width="1.1"/>
<circle cx="58.2" cy="176.2" r="2.0" fill="none" stroke="#3f78c2" stroke-width="1"/>
<circle cx="64.4" cy="176.2" r="2.0" fill="none" stroke="#3f78c2" stroke-width="1"/>
<text x="70.5" y="176.8" fill="#3b3b3b" style="font-size:10.8px;" textLength="42.1" lengthAdjust="spacing">Вырезать</text>
<rect x="55.5" y="187.0" width="6.5" height="8.0" fill="#fff" stroke="#777" stroke-width="0.8"/>
<rect x="59.5" y="190.0" width="7.0" height="8.5" fill="#fff" stroke="#777" stroke-width="0.8"/>
<path d="M61 193.5 h4 M61 195.5 h4" fill="none" stroke="#3f78c2" stroke-width="0.8"/>
<text x="70.5" y="196.2" fill="#3b3b3b" style="font-size:10.8px;" textLength="53.5" lengthAdjust="spacing">Копировать</text>
<path d="M133 191 h4.4 l-2.2 2.4 z" fill="#666"/>
<path d="M56 213 l5 -5 l3 3 l-5 5 z" fill="#e9bf6a"/>
<path d="M61.5 207.5 l4 -3.5 l1.8 1.8 l-3.6 4 z" fill="#4d4d4d"/>
<text x="70.5" y="215.6" fill="#3b3b3b" style="font-size:10.8px;" textLength="90.2" lengthAdjust="spacing">Формат по образцу</text>
<text x="47.8" y="234.9" fill="#6a6a6a" style="font-size:10px;" textLength="63.9" lengthAdjust="spacing">Буфер обмена</text>
<path d="M160.5 230.5 h4 v4 M161 231 l3 3" fill="none" stroke="#999" stroke-width="0.8"/>
<rect x="182.5" y="170.5" width="23.0" height="17.5" fill="#fff" stroke="#9a9a9a" stroke-width="1" rx="1"/>
<rect x="185.5" y="174.5" width="17.0" height="4.0" fill="#cfcfcf"/>
<path d="M185.5 181.5 h17 M185.5 184.5 h17" fill="none" stroke="#bdbdbd" stroke-width="0.8"/>
<g stroke="#eab84a" stroke-width="1"><line x1="184.5" y1="171.5" x2="188.8" y2="171.5"/><line x1="184.5" y1="171.5" x2="180.2" y2="171.5"/><line x1="184.5" y1="171.5" x2="184.5" y2="175.8"/><line x1="184.5" y1="171.5" x2="184.5" y2="167.2"/><line x1="184.5" y1="171.5" x2="187.5" y2="174.5"/><line x1="184.5" y1="171.5" x2="181.5" y2="174.5"/><line x1="184.5" y1="171.5" x2="187.5" y2="168.5"/><line x1="184.5" y1="171.5" x2="181.5" y2="168.5"/></g><text x="175.7" y="205.7" fill="#3b3b3b" style="font-size:10.8px;" textLength="35.7" lengthAdjust="spacing">Создать</text>
<text x="178.0" y="219.0" fill="#3b3b3b" style="font-size:10.8px;" textLength="26.5" lengthAdjust="spacing">слайд</text>
<path d="M206.5 214 h4.4 l-2.2 2.4 z" fill="#666"/>
<rect x="217.5" y="167.5" width="11.5" height="10.5" fill="#fff" stroke="#777" stroke-width="0.9"/>
<rect x="219.0" y="169.3" width="8.5" height="2.0" fill="#bbb"/>
<rect x="219.0" y="172.5" width="3.0" height="4.0" fill="#bbb"/>
<path d="M223.5 173 h4 M223.5 175.5 h4" fill="none" stroke="#999" stroke-width="0.8"/>
<text x="232.9" y="176.8" fill="#3b3b3b" style="font-size:10.8px;" textLength="28.1" lengthAdjust="spacing">Макет</text>
<path d="M263.5 172 h4.4 l-2.2 2.4 z" fill="#666"/>
<rect x="218.5" y="189.0" width="11.0" height="9.0" fill="#fff" stroke="#777" stroke-width="0.9"/>
<path d="M217 191.5 a4.5 4.5 0 0 1 7.5 -3 M217 187.5 v4 h4" fill="none" stroke="#2f6db5" stroke-width="1.1"/>
<text x="232.9" y="196.2" fill="#3b3b3b" style="font-size:10.8px;" textLength="43.8" lengthAdjust="spacing">Сбросить</text>
<rect x="221.5" y="208.5" width="8.0" height="9.0" fill="#fff" stroke="#777" stroke-width="0.9"/>
<rect x="220.0" y="206.0" width="10.5" height="2.4" fill="#e67c4d"/>
<text x="232.9" y="215.6" fill="#3b3b3b" style="font-size:10.8px;" textLength="30.1" lengthAdjust="spacing">Раздел</text>
<path d="M265.5 211 h4.4 l-2.2 2.4 z" fill="#666"/>
<text x="211.8" y="234.9" fill="#6a6a6a" style="font-size:10px;" textLength="33.2" lengthAdjust="spacing">Слайды</text>
<rect x="290.3" y="170.4" width="87.0" height="18.4" fill="#fcfcfc" stroke="#e1e1e1" stroke-width="1"/>
<rect x="377.3" y="170.4" width="33.0" height="18.4" fill="#fcfcfc" stroke="#e1e1e1" stroke-width="1"/>
<path d="M369 178.5 h4.4 l-2.2 2.4 z" fill="#c4c4c4"/>
<path d="M402.5 178.5 h4.4 l-2.2 2.4 z" fill="#c4c4c4"/>
<text x="416.6" y="184.5" fill="#a6a6a6" style="font-size:12.5px;">A</text>
<path d="M424 174 l1.8 -2 l1.8 2 z" fill="#bbb"/>
<text x="436.0" y="184.5" fill="#a6a6a6" style="font-size:10.5px;">A</text>
<path d="M442 172 l1.8 2 l1.8 -2 z" fill="#bbb"/>
<line x1="451.4" y1="171.0" x2="451.4" y2="188.0" stroke="#e4e4e4" stroke-width="1"/>
<path d="M460 182 l6 -7 l5 4 l-6 7 z" fill="#cfcfcf"/>
<text x="458.5" y="176.5" fill="#bbb" style="font-size:7px;">A</text>
<text x="294.0" y="209.3" fill="#a6a6a6" style="font-size:12.5px;font-weight:700;" textLength="11.0" lengthAdjust="spacing">Ж</text>
<text x="313.0" y="209.3" fill="#a6a6a6" style="font-size:12.5px;font-weight:700;font-style:italic;" textLength="9.0" lengthAdjust="spacing">К</text>
<text x="332.0" y="209.3" fill="#a6a6a6" style="font-size:12.5px;" textLength="9.0" lengthAdjust="spacing">Ч</text>
<line x1="332.0" y1="211.5" x2="341.0" y2="211.5" stroke="#a6a6a6" stroke-width="1"/>
<text x="351.5" y="209.3" fill="#a6a6a6" style="font-size:12.5px;font-weight:700;" textLength="8.5" lengthAdjust="spacing">S</text>
<text x="366.0" y="209.3" fill="#a6a6a6" style="font-size:10.5px;" textLength="15.0" lengthAdjust="spacing">abc</text>
<line x1="366.0" y1="205.5" x2="381.0" y2="205.5" stroke="#a6a6a6" stroke-width="0.8"/>
<text x="386.0" y="207.5" fill="#a6a6a6" style="font-size:9.5px;" textLength="13.0" lengthAdjust="spacing">AV</text>
<path d="M386 210.5 h12 M388 208.8 l-2 1.7 l2 1.7 M396 208.8 l2 1.7 l-2 1.7" fill="none" stroke="#a6a6a6" stroke-width="0.8"/>
<path d="M402 206 h4.4 l-2.2 2.4 z" fill="#c4c4c4"/>
<text x="413.0" y="209.3" fill="#a6a6a6" style="font-size:11.5px;" textLength="13.0" lengthAdjust="spacing">Aa</text>
<path d="M429 206 h4.4 l-2.2 2.4 z" fill="#c4c4c4"/>
<line x1="441.5" y1="197.0" x2="441.5" y2="214.0" stroke="#e4e4e4" stroke-width="1"/>
<text x="450.0" y="210.0" fill="#a6a6a6" style="font-size:14.5px;" textLength="9.5" lengthAdjust="spacing">A</text>
<path d="M466.5 206 h4.4 l-2.2 2.4 z" fill="#c4c4c4"/>
<text x="359.6" y="234.9" fill="#6a6a6a" style="font-size:10px;" textLength="32.1" lengthAdjust="spacing">Шрифт</text>
<path d="M468.5 230.5 h4 v4 M469 231 l3 3" fill="none" stroke="#bbb" stroke-width="0.8"/>
<rect x="484.5" y="173.2" width="1.8" height="1.8" fill="#c2c2c2"/>
<rect x="484.5" y="178.2" width="1.8" height="1.8" fill="#c2c2c2"/>
<rect x="484.5" y="183.2" width="1.8" height="1.8" fill="#c2c2c2"/>
<line x1="489.0" y1="174.0" x2="496.0" y2="174.0" stroke="#c2c2c2" stroke-width="1"/>
<line x1="489.0" y1="179.0" x2="496.0" y2="179.0" stroke="#c2c2c2" stroke-width="1"/>
<line x1="489.0" y1="184.0" x2="496.0" y2="184.0" stroke="#c2c2c2" stroke-width="1"/>
<path d="M503 178.5 h4.4 l-2.2 2.4 z" fill="#c2c2c2"/>
<line x1="517.0" y1="174.0" x2="524.0" y2="174.0" stroke="#c2c2c2" stroke-width="1"/>
<line x1="517.0" y1="179.0" x2="524.0" y2="179.0" stroke="#c2c2c2" stroke-width="1"/>
<line x1="517.0" y1="184.0" x2="524.0" y2="184.0" stroke="#c2c2c2" stroke-width="1"/>
<text x="512.5" y="176.0" fill="#a6a6a6" style="font-size:4.5px;">1</text>
<text x="512.5" y="181.0" fill="#a6a6a6" style="font-size:4.5px;">2</text>
<text x="512.5" y="186.0" fill="#a6a6a6" style="font-size:4.5px;">3</text>
<path d="M531 178.5 h4.4 l-2.2 2.4 z" fill="#c2c2c2"/>
<line x1="542.0" y1="171.0" x2="542.0" y2="188.0" stroke="#e6e6e6" stroke-width="1"/>
<line x1="553.0" y1="174.0" x2="562.0" y2="174.0" stroke="#c2c2c2" stroke-width="1"/>
<line x1="557.0" y1="177.3" x2="562.0" y2="177.3" stroke="#c2c2c2" stroke-width="1"/>
<line x1="557.0" y1="180.6" x2="562.0" y2="180.6" stroke="#c2c2c2" stroke-width="1"/>
<line x1="553.0" y1="183.9" x2="562.0" y2="183.9" stroke="#c2c2c2" stroke-width="1"/>
<path d="M548 179 h5 M550 177.2 l-2 1.8 l2 1.8" fill="none" stroke="#c2c2c2" stroke-width="1"/>
<line x1="571.0" y1="174.0" x2="580.0" y2="174.0" stroke="#c2c2c2" stroke-width="1"/>
<line x1="575.0" y1="177.3" x2="580.0" y2="177.3" stroke="#c2c2c2" stroke-width="1"/>
<line x1="575.0" y1="180.6" x2="580.0" y2="180.6" stroke="#c2c2c2" stroke-width="1"/>
<line x1="571.0" y1="183.9" x2="580.0" y2="183.9" stroke="#c2c2c2" stroke-width="1"/>
<path d="M566 179 h5 M569 177.2 l2 1.8 l-2 1.8" fill="none" stroke="#c2c2c2" stroke-width="1"/>
<line x1="586.5" y1="171.0" x2="586.5" y2="188.0" stroke="#e6e6e6" stroke-width="1"/>
<line x1="598.0" y1="174.5" x2="606.0" y2="174.5" stroke="#c2c2c2" stroke-width="1"/>
<line x1="598.0" y1="177.8" x2="606.0" y2="177.8" stroke="#c2c2c2" stroke-width="1"/>
<line x1="598.0" y1="181.1" x2="606.0" y2="181.1" stroke="#c2c2c2" stroke-width="1"/>
<line x1="598.0" y1="184.4" x2="606.0" y2="184.4" stroke="#c2c2c2" stroke-width="1"/>
<path d="M594 173.5 v13 M592.3 175.3 l1.7 -1.8 l1.7 1.8 M592.3 184.7 l1.7 1.8 l1.7 -1.8" fill="none" stroke="#c2c2c2" stroke-width="1"/>
<path d="M609.5 178.5 h4.4 l-2.2 2.4 z" fill="#c2c2c2"/>
<line x1="485.0" y1="201.0" x2="496.0" y2="201.0" stroke="#c2c2c2" stroke-width="1"/>
<line x1="485.0" y1="204.1" x2="493.0" y2="204.1" stroke="#c2c2c2" stroke-width="1"/>
<line x1="485.0" y1="207.2" x2="496.0" y2="207.2" stroke="#c2c2c2" stroke-width="1"/>
<line x1="485.0" y1="210.3" x2="493.0" y2="210.3" stroke="#c2c2c2" stroke-width="1"/>
<line x1="503.0" y1="201.0" x2="514.0" y2="201.0" stroke="#c2c2c2" stroke-width="1"/>
<line x1="504.5" y1="204.1" x2="512.5" y2="204.1" stroke="#c2c2c2" stroke-width="1"/>
<line x1="503.0" y1="207.2" x2="514.0" y2="207.2" stroke="#c2c2c2" stroke-width="1"/>
<line x1="504.5" y1="210.3" x2="512.5" y2="210.3" stroke="#c2c2c2" stroke-width="1"/>
<line x1="521.5" y1="201.0" x2="532.5" y2="201.0" stroke="#c2c2c2" stroke-width="1"/>
<line x1="524.5" y1="204.1" x2="532.5" y2="204.1" stroke="#c2c2c2" stroke-width="1"/>
<line x1="521.5" y1="207.2" x2="532.5" y2="207.2" stroke="#c2c2c2" stroke-width="1"/>
<line x1="524.5" y1="210.3" x2="532.5" y2="210.3" stroke="#c2c2c2" stroke-width="1"/>
<line x1="540.0" y1="201.0" x2="551.0" y2="201.0" stroke="#c2c2c2" stroke-width="1"/>
<line x1="540.0" y1="204.1" x2="551.0" y2="204.1" stroke="#c2c2c2" stroke-width="1"/>
<line x1="540.0" y1="207.2" x2="551.0" y2="207.2" stroke="#c2c2c2" stroke-width="1"/>
<line x1="540.0" y1="210.3" x2="551.0" y2="210.3" stroke="#c2c2c2" stroke-width="1"/>
<line x1="558.5" y1="197.0" x2="558.5" y2="214.0" stroke="#e6e6e6" stroke-width="1"/>
<line x1="566.0" y1="201.0" x2="571.0" y2="201.0" stroke="#c2c2c2" stroke-width="1"/>
<line x1="566.0" y1="204.1" x2="571.0" y2="204.1" stroke="#c2c2c2" stroke-width="1"/>
<line x1="566.0" y1="207.2" x2="571.0" y2="207.2" stroke="#c2c2c2" stroke-width="1"/>
<line x1="566.0" y1="210.3" x2="571.0" y2="210.3" stroke="#c2c2c2" stroke-width="1"/>
<line x1="572.5" y1="201.0" x2="577.5" y2="201.0" stroke="#c2c2c2" stroke-width="1"/>
<line x1="572.5" y1="204.1" x2="577.5" y2="204.1" stroke="#c2c2c2" stroke-width="1"/>
<line x1="572.5" y1="207.2" x2="577.5" y2="207.2" stroke="#c2c2c2" stroke-width="1"/>
<line x1="572.5" y1="210.3" x2="577.5" y2="210.3" stroke="#c2c2c2" stroke-width="1"/>
<path d="M582 206 h4.4 l-2.2 2.4 z" fill="#c2c2c2"/>
<path d="M621.5 167 v11 M625 169 v9 M632 169 v9 M620 176.5 l1.5 1.7 l1.5 -1.7 M630.5 176.5 l1.5 1.7 l1.5 -1.7" fill="none" stroke="#b0b0b0" stroke-width="1"/>
<text x="625.5" y="173.0" fill="#b0b0b0" style="font-size:7px;">A</text>
<text x="636.7" y="176.8" fill="#a6a6a6" style="font-size:10.8px;" textLength="92.5" lengthAdjust="spacing">Направление текста</text>
<path d="M732 172 h4.4 l-2.2 2.4 z" fill="#c2c2c2"/>
<rect x="620.5" y="187.5" width="12.5" height="11.5" fill="none" stroke="#b5b5b5" stroke-width="0.9" stroke-dasharray="1.5 1"/>
<path d="M626.7 189 v8.5 M625 191 l1.7 -1.8 l1.7 1.8 M625 195.8 l1.7 1.8 l1.7 -1.8 M623 193.5 h7.5" fill="none" stroke="#b5b5b5" stroke-width="0.9"/>
<text x="636.7" y="196.2" fill="#a6a6a6" style="font-size:10.8px;" textLength="75.7" lengthAdjust="spacing">Выровнять текст</text>
<path d="M715.5 191.5 h4.4 l-2.2 2.4 z" fill="#c2c2c2"/>
<path d="M621 206 l3 -2.5 h7 l3 5 h-8 z" fill="#bdbdbd"/>
<rect x="625.5" y="210.0" width="8.5" height="7.0" fill="#fff" stroke="#b5b5b5" stroke-width="0.9"/>
<path d="M625.5 212.3 h8.5 M628.5 212.3 v4.7" fill="none" stroke="#c5c5c5" stroke-width="0.7"/>
<text x="636.7" y="215.6" fill="#a6a6a6" style="font-size:10.8px;" textLength="119.1" lengthAdjust="spacing">Преобразовать в SmartArt</text>
<path d="M759.5 211 h4.4 l-2.2 2.4 z" fill="#c2c2c2"/>
<text x="605.0" y="234.9" fill="#6a6a6a" style="font-size:10px;" textLength="26.2" lengthAdjust="spacing">Абзац</text>
<path d="M763 230.5 h4 v4 M763.5 231 l3 3" fill="none" stroke="#bbb" stroke-width="0.8"/>
<rect x="777.5" y="166.6" width="113.9" height="49.6" fill="#ffffff" stroke="#bdbdbd" stroke-width="1"/>
<line x1="879.7" y1="166.6" x2="879.7" y2="216.2" stroke="#d0d0d0" stroke-width="1"/>
<line x1="879.7" y1="183.0" x2="891.4" y2="183.0" stroke="#d0d0d0" stroke-width="1"/>
<line x1="879.7" y1="199.7" x2="891.4" y2="199.7" stroke="#d0d0d0" stroke-width="1"/>
<path d="M883.5 176 l2 -2 l2 2 z" fill="#c9c9c9"/>
<path d="M883.5 190.5 l2 2 l2 -2 z" fill="#555"/>
<path d="M883.5 207 h4.2 M883.5 208.8 l2.1 2.3 l2.1 -2.3 z" fill="#555" stroke="#555" stroke-width="0.7"/>
<rect x="780.5" y="169.5" width="11.5" height="9.0" fill="#fff" stroke="#555" stroke-width="0.9"/>
<text x="782.0" y="175.0" fill="#2f6db5" style="font-size:5px;font-weight:700;">A</text>
<path d="M786.5 173 h4 M782 176.5 h8.5" fill="none" stroke="#999" stroke-width="0.7"/>
<line x1="797.5" y1="169.5" x2="807.5" y2="179.0" stroke="#555" stroke-width="0.9"/>
<path d="M814 169.5 l10 9.5 M824.2 175.5 v3.7 h-3.7" fill="none" stroke="#555" stroke-width="0.9"/>
<rect x="830.5" y="170.0" width="11.5" height="9.0" fill="none" stroke="#555" stroke-width="0.9"/>
<ellipse cx="853" cy="174.5" rx="6" ry="4.5" fill="none" stroke="#555" stroke-width="0.9"/><rect x="863.5" y="170.0" width="12.5" height="9.0" fill="none" stroke="#555" stroke-width="0.9" rx="2"/>
<path d="M782 196 l5 -9.5 l5 9.5 z" fill="none" stroke="#555" stroke-width="0.9"/>
<path d="M797 187 h4.5 v8.5 h5" fill="none" stroke="#555" stroke-width="0.9"/>
<path d="M813 187 h4.5 v8.5 h6 M821.7 193.7 l1.9 1.8 l-1.9 1.8" fill="none" stroke="#555" stroke-width="0.9"/>
<path d="M830.5 189.3 h5.5 v-2.6 l5 4.6 l-5 4.6 v-2.6 h-5.5 z" fill="none" stroke="#555" stroke-width="0.9"/>
<path d="M850.3 185.8 h5.4 v5.5 h2.6 l-5.3 5.2 l-5.3 -5.2 h2.6 z" fill="none" stroke="#555" stroke-width="0.9"/>
<path d="M864.5 196 v-7 a2 2 0 0 1 2 -2 h5 a2.5 2.5 0 0 1 2.5 2.5 a2 2 0 0 1 2 2 v4.5 z" fill="none" stroke="#555" stroke-width="0.9"/>
<path d="M786 203 c-4 1 -3 4 0 5 c3 1 3 4 0 4.5 c-2 0 -2 -2.5 0 -2.5" fill="none" stroke="#555" stroke-width="0.9"/>
<path d="M797 204.5 c6 0 9.5 3.5 9.5 8.5" fill="none" stroke="#555" stroke-width="0.9"/>
<path d="M813 212.5 c2.5 -12 5.5 -12 8 0 c0.5 1.5 2 1.5 3 0" fill="none" stroke="#555" stroke-width="0.9"/>
<text x="833.5" y="212.0" fill="#555" style="font-size:9.5px;">{</text>
<text x="851.5" y="212.0" fill="#555" style="font-size:9.5px;">}</text>
<path d="M870 202.5 l1.9 4.2 l4.5 0.4 l-3.4 3 l1 4.4 l-4 -2.4 l-4 2.4 l1 -4.4 l-3.4 -3 l4.5 -0.4 z" fill="none" stroke="#555" stroke-width="0.9"/>
<rect x="923.0" y="175.0" width="10.0" height="10.0" fill="#f0c36d"/>
<rect x="919.5" y="179.0" width="7.5" height="7.5" fill="#f0c36d"/>
<rect x="914.5" y="168.5" width="8.5" height="8.5" fill="#fff" stroke="#8a8a8a" stroke-width="0.9"/>
<rect x="928.0" y="181.5" width="8.5" height="8.5" fill="#fff" stroke="#8a8a8a" stroke-width="0.9"/>
<text x="896.0" y="205.7" fill="#3b3b3b" style="font-size:10.8px;" textLength="59.8" lengthAdjust="spacing">Упорядочить</text>
<path d="M924 214 h4.4 l-2.2 2.4 z" fill="#666"/>
<rect x="973.0" y="168.5" width="18.0" height="18.0" fill="#f3eff1" stroke="#d9d5d7" stroke-width="1" rx="4"/>
<path d="M981 190 l12 -13 l2.5 2.5 l-12 12 z" fill="#cfcfcf"/>
<text x="960.3" y="205.7" fill="#a6a6a6" style="font-size:10.8px;" textLength="46.4" lengthAdjust="spacing">Экспресс-</text>
<text x="968.0" y="218.6" fill="#a6a6a6" style="font-size:10.8px;" textLength="25.8" lengthAdjust="spacing">стили</text>
<path d="M996.5 214 h4.4 l-2.2 2.4 z" fill="#c2c2c2"/>
<path d="M1014 177.5 l4 -7 l5 4 l-3.5 5 z M1012.5 180 h12" fill="none" stroke="#b9b9b9" stroke-width="1"/>
<text x="1027.8" y="177.6" fill="#a6a6a6" style="font-size:10.8px;" textLength="76.9" lengthAdjust="spacing">Заливка фигуры</text>
<path d="M1107.5 172.5 h4.4 l-2.2 2.4 z" fill="#c2c2c2"/>
<rect x="1013.0" y="189.0" width="9.0" height="8.0" fill="none" stroke="#b9b9b9" stroke-width="1"/>
<path d="M1017 195 l7 -8" fill="none" stroke="#b0b0b0" stroke-width="1.6"/>
<text x="1027.8" y="197.0" fill="#a6a6a6" style="font-size:10.8px;" textLength="71.5" lengthAdjust="spacing">Контур фигуры</text>
<path d="M1102 192 h4.4 l-2.2 2.4 z" fill="#c2c2c2"/>
<ellipse cx="1018" cy="211" rx="5.5" ry="4" fill="#d8d8d8" stroke="#b5b5b5" stroke-width="0.9"/><text x="1027.8" y="216.2" fill="#a6a6a6" style="font-size:10.8px;" textLength="81.5" lengthAdjust="spacing">Эффекты фигуры</text>
<path d="M1112 211.5 h4.4 l-2.2 2.4 z" fill="#c2c2c2"/>
<text x="918.8" y="234.5" fill="#6a6a6a" style="font-size:10px;" textLength="46.9" lengthAdjust="spacing">Рисование</text>
<path d="M1116 230.5 h4 v4 M1116.5 231 l3 3" fill="none" stroke="#bbb" stroke-width="0.8"/>
<rect x="1132.5" y="170.0" width="4.6" height="8.0" fill="#333" rx="1.5"/>
<rect x="1138.5" y="170.0" width="4.6" height="8.0" fill="#333" rx="1.5"/>
<rect x="1134.0" y="167.5" width="2.4" height="3.5" fill="#333"/>
<rect x="1139.5" y="167.5" width="2.4" height="3.5" fill="#333"/>
<text x="1149.0" y="177.6" fill="#3b3b3b" style="font-size:10.8px;" textLength="26.9" lengthAdjust="spacing">Найти</text>
<text x="1131.5" y="191.0" fill="#444" style="font-size:7.5px;">ab</text>
<text x="1134.5" y="198.5" fill="#2f6db5" style="font-size:7.5px;">ac</text>
<path d="M1131.5 195 l1.4 1.6 l1.4 -1.6" fill="none" stroke="#2f6db5" stroke-width="0.8"/>
<text x="1149.0" y="197.0" fill="#3b3b3b" style="font-size:10.8px;" textLength="43.3" lengthAdjust="spacing">Заменить</text>
<path d="M1200.5 192 h4.4 l-2.2 2.4 z" fill="#666"/>
<path d="M1135.5 205 v10.5 l2.6 -2.3 l2 4.2 l1.7 -0.8 l-2 -4.1 h3.4 z" fill="#fff" stroke="#444" stroke-width="0.9"/>
<text x="1149.0" y="216.2" fill="#3b3b3b" style="font-size:10.8px;" textLength="43.3" lengthAdjust="spacing">Выделить</text>
<path d="M1194.5 211.5 h4.4 l-2.2 2.4 z" fill="#666"/>
<text x="1132.8" y="234.5" fill="#6a6a6a" style="font-size:10px;" textLength="72.6" lengthAdjust="spacing">Редактирование</text>
<path d="M1596 233.5 l3.3 -3.3 l3.3 3.3" fill="none" stroke="#555" stroke-width="1.4"/>
<linearGradient id="wsg" x1="0" y1="0" x2="0" y2="1"><stop offset="0" stop-color="#ffffff"/><stop offset="0.35" stop-color="#f6f6f6"/><stop offset="1" stop-color="#eeeeee"/></linearGradient>
<rect x="150.0" y="238.5" width="1449.0" height="735.5" fill="url(#wsg)"/>
<rect x="1598.7" y="240.0" width="10.5" height="734.0" fill="#f0f0f0"/>
<rect x="1599.0" y="241.3" width="10.0" height="12.0" fill="#ffffff" stroke="#cfcfcf" stroke-width="1"/>
<path d="M1601.8 249 l2.3 -2.6 l2.3 2.6 z" fill="#777"/>
<rect x="1599.0" y="508.0" width="10.0" height="27.0" fill="#ffffff" stroke="#cfcfcf" stroke-width="1"/>
<rect x="1599.0" y="911.0" width="10.0" height="11.0" fill="#ffffff" stroke="#cfcfcf" stroke-width="1"/>
<path d="M1601.8 915.3 l2.3 2.4 l2.3 -2.4 z" fill="#777"/>
<path d="M1601.6 931.3 l2.5 -2.5 l2.5 2.5 z M1601.6 935 l2.5 -2.5 l2.5 2.5 z" fill="#777"/>
<path d="M1601.6 942.8 l2.5 2.5 l2.5 -2.5 z M1601.6 946.5 l2.5 2.5 l2.5 -2.5 z" fill="#777"/>
<rect x="254.6" y="253.5" width="1241.0" height="700.0" fill="#ffffff" stroke="#d2d2d2" stroke-width="1"/>
<line x1="254.0" y1="954.3" x2="1496.0" y2="954.3" stroke="#e0e0e0" stroke-width="1"/>
<g clip-path="url(#cpThumbs)">
<text x="14.2" y="264.9" fill="#555" style="font-size:13.5px;">1</text>
<rect x="26.1" y="253.7" width="92.0" height="53.0" fill="#ffffff" stroke="#c9c9c9" stroke-width="1"/>
<rect x="56.1" y="257.7" width="32.0" height="0.8" fill="#cfcfcf"/>
<rect x="58.1" y="260.2" width="28.0" height="0.8" fill="#cfcfcf"/>
<rect x="34.1" y="265.2" width="8.0" height="0.8" fill="#cfcfcf"/>
<rect x="44.1" y="265.0" width="40.0" height="1.4" fill="#555"/>
<rect x="34.1" y="268.2" width="8.0" height="0.8" fill="#cfcfcf"/>
<rect x="44.1" y="268.0" width="50.0" height="1.4" fill="#555"/>
<rect x="38.1" y="273.7" width="68.0" height="1.0" fill="#8c8c8c"/>
<rect x="34.1" y="277.2" width="76.0" height="1.0" fill="#8c8c8c"/>
<rect x="36.1" y="280.7" width="72.0" height="1.0" fill="#8c8c8c"/>
<rect x="34.1" y="291.2" width="8.0" height="0.8" fill="#cfcfcf"/>
<rect x="44.1" y="291.4" width="44.0" height="1.1" fill="#444"/>
<rect x="34.1" y="295.2" width="8.0" height="0.8" fill="#cfcfcf"/>
<rect x="44.1" y="295.4" width="24.0" height="1.1" fill="#444"/>
<text x="14.2" y="332.9" fill="#555" style="font-size:13.5px;">2</text>
<rect x="26.1" y="321.7" width="92.0" height="53.0" fill="#ffffff" stroke="#c9c9c9" stroke-width="1"/>
<rect x="58.1" y="328.2" width="30.0" height="1.4" fill="#444"/>
<rect x="40.1" y="335.2" width="72.0" height="0.8" fill="#cfcfcf"/>
<rect x="34.1" y="337.8" width="78.0" height="0.8" fill="#cfcfcf"/>
<rect x="40.1" y="341.9" width="70.0" height="0.8" fill="#cfcfcf"/>
<rect x="34.1" y="344.5" width="40.0" height="0.8" fill="#cfcfcf"/>
<rect x="40.1" y="348.6" width="72.0" height="0.8" fill="#cfcfcf"/>
<rect x="34.1" y="351.2" width="50.0" height="0.8" fill="#cfcfcf"/>
<rect x="112.1" y="369.2" width="2.0" height="0.8" fill="#cfcfcf"/>
<text x="14.2" y="401.0" fill="#555" style="font-size:13.5px;">3</text>
<rect x="26.1" y="389.8" width="92.0" height="53.0" fill="#ffffff" stroke="#c9c9c9" stroke-width="1"/>
<rect x="58.1" y="396.3" width="30.0" height="1.4" fill="#444"/>
<rect x="38.1" y="401.8" width="78.0" height="0.8" fill="#c4c4c4"/>
<rect x="34.1" y="404.3" width="71.0" height="0.8" fill="#c4c4c4"/>
<rect x="34.1" y="406.8" width="77.0" height="0.8" fill="#c4c4c4"/>
<rect x="34.1" y="409.3" width="70.0" height="0.8" fill="#c4c4c4"/>
<rect x="38.1" y="411.8" width="76.0" height="0.8" fill="#c4c4c4"/>
<rect x="34.1" y="414.3" width="69.0" height="0.8" fill="#c4c4c4"/>
<rect x="34.1" y="416.8" width="75.0" height="0.8" fill="#c4c4c4"/>
<rect x="34.1" y="419.3" width="68.0" height="0.8" fill="#c4c4c4"/>
<rect x="38.1" y="421.8" width="74.0" height="0.8" fill="#c4c4c4"/>
<rect x="34.1" y="424.3" width="67.0" height="0.8" fill="#c4c4c4"/>
<rect x="34.1" y="426.8" width="73.0" height="0.8" fill="#c4c4c4"/>
<rect x="34.1" y="429.3" width="66.0" height="0.8" fill="#c4c4c4"/>
<rect x="38.1" y="431.8" width="72.0" height="0.8" fill="#c4c4c4"/>
<rect x="34.1" y="434.3" width="78.0" height="0.8" fill="#c4c4c4"/>
<rect x="34.1" y="436.8" width="71.0" height="0.8" fill="#c4c4c4"/>
<text x="14.2" y="469.0" fill="#555" style="font-size:13.5px;">4</text>
<rect x="26.1" y="457.8" width="92.0" height="53.0" fill="#ffffff" stroke="#c9c9c9" stroke-width="1"/>
<rect x="36.1" y="462.3" width="74.0" height="1.5" fill="#333"/>
<rect x="56.1" y="465.4" width="34.0" height="1.5" fill="#333"/>
<rect x="38.1" y="470.3" width="80.0" height="0.8" fill="#c4c4c4"/>
<rect x="32.1" y="472.8" width="75.0" height="0.8" fill="#c4c4c4"/>
<rect x="32.1" y="475.3" width="70.0" height="0.8" fill="#c4c4c4"/>
<rect x="32.1" y="477.8" width="76.0" height="0.8" fill="#c4c4c4"/>
<rect x="32.1" y="480.3" width="71.0" height="0.8" fill="#c4c4c4"/>
<rect x="38.1" y="482.8" width="77.0" height="0.8" fill="#c4c4c4"/>
<rect x="32.1" y="485.3" width="72.0" height="0.8" fill="#c4c4c4"/>
<rect x="32.1" y="487.8" width="78.0" height="0.8" fill="#c4c4c4"/>
<rect x="32.1" y="490.3" width="73.0" height="0.8" fill="#c4c4c4"/>
<rect x="32.1" y="492.8" width="79.0" height="0.8" fill="#c4c4c4"/>
<rect x="38.1" y="495.3" width="74.0" height="0.8" fill="#c4c4c4"/>
<rect x="32.1" y="497.8" width="80.0" height="0.8" fill="#c4c4c4"/>
<rect x="32.1" y="500.3" width="75.0" height="0.8" fill="#c4c4c4"/>
<rect x="32.1" y="502.8" width="58.0" height="1.2" fill="#6d9bd1"/>
<text x="14.2" y="537.0" fill="#555" style="font-size:13.5px;">5</text>
<rect x="26.1" y="525.8" width="92.0" height="53.0" fill="#ffffff" stroke="#c9c9c9" stroke-width="1"/>
<rect x="51.1" y="530.8" width="44.0" height="1.1" fill="#8c8c8c"/>
<rect x="55.1" y="533.8" width="36.0" height="1.1" fill="#8c8c8c"/>
<rect x="34.1" y="540.3" width="40.0" height="0.8" fill="#cfcfcf"/>
<rect x="34.1" y="543.0" width="66.0" height="0.8" fill="#cfcfcf"/>
<rect x="34.1" y="545.7" width="62.0" height="0.8" fill="#cfcfcf"/>
<rect x="34.1" y="548.4" width="48.0" height="0.8" fill="#cfcfcf"/>
<rect x="34.1" y="551.1" width="30.0" height="0.8" fill="#cfcfcf"/>
<rect x="34.1" y="553.8" width="34.0" height="0.8" fill="#cfcfcf"/>
<rect x="34.1" y="556.5" width="60.0" height="0.8" fill="#cfcfcf"/>
<text x="14.2" y="605.0" fill="#555" style="font-size:13.5px;">6</text>
<rect x="26.1" y="593.8" width="92.0" height="53.0" fill="#ffffff" stroke="#c9c9c9" stroke-width="1"/>
<rect x="50.1" y="598.8" width="46.0" height="1.0" fill="#8c8c8c"/>
<rect x="60.1" y="604.3" width="24.0" height="0.8" fill="#cfcfcf"/>
<rect x="36.1" y="615.8" width="9.0" height="9.0" fill="#fff" stroke="#9c4fc0" stroke-width="1.2" rx="2"/>
<rect x="38.6" y="618.3" width="4.0" height="4.0" fill="#9c4fc0"/>
<rect x="37.1" y="629.3" width="7.0" height="2.6" fill="#b565d0"/>
<rect x="38.1" y="611.3" width="4.0" height="0.8" fill="#cfcfcf"/>
<rect x="65.1" y="615.8" width="9.0" height="9.0" fill="#fff" stroke="#f3b23a" stroke-width="1.2" rx="2"/>
<rect x="67.6" y="618.3" width="4.0" height="4.0" fill="#f3b23a"/>
<rect x="66.1" y="629.3" width="7.0" height="2.6" fill="#b565d0"/>
<rect x="67.1" y="611.3" width="4.0" height="0.8" fill="#cfcfcf"/>
<rect x="93.1" y="615.8" width="9.0" height="9.0" fill="#fff" stroke="#ef8a3a" stroke-width="1.2" rx="2"/>
<rect x="95.6" y="618.3" width="4.0" height="4.0" fill="#ef8a3a"/>
<rect x="94.1" y="629.3" width="7.0" height="2.6" fill="#b565d0"/>
<rect x="95.1" y="611.3" width="4.0" height="0.8" fill="#cfcfcf"/>
<rect x="48.1" y="618.8" width="12.0" height="0.8" fill="#cfcfcf"/>
<rect x="48.1" y="622.3" width="12.0" height="0.8" fill="#cfcfcf"/>
<rect x="77.1" y="620.3" width="12.0" height="0.8" fill="#cfcfcf"/>
<rect x="106.1" y="629.8" width="6.0" height="0.8" fill="#cfcfcf"/>
<text x="14.2" y="673.1" fill="#555" style="font-size:13.5px;">7</text>
<rect x="26.1" y="661.9" width="92.0" height="53.0" fill="#ffffff" stroke="#c9c9c9" stroke-width="1"/>
<rect x="50.1" y="666.9" width="46.0" height="1.0" fill="#8c8c8c"/>
<rect x="31.1" y="681.4" width="7.0" height="7.0" fill="#9c4fc0" rx="1.5"/>
<rect x="33.1" y="683.4" width="3.0" height="3.0" fill="#fff"/>
<path d="M40.1 685.88 c10 2 18 8 36 8" fill="none" stroke="#d9e6ef" stroke-width="3"/>
<ellipse cx="50.1" cy="685.4" rx="4.5" ry="2.4" fill="#5a6a76"/><rect x="63.1" y="682.9" width="5.0" height="6.0" fill="#7fb3d6"/>
<rect x="78.1" y="683.9" width="28.0" height="21.0" fill="#fff" stroke="#cfe0ea" stroke-width="1" rx="3"/>
<rect x="82.1" y="687.9" width="6.0" height="6.0" fill="#ef8a3a" rx="1.2"/>
<rect x="92.1" y="686.9" width="6.0" height="6.0" fill="#ef8a3a" rx="1.2"/>
<rect x="83.1" y="695.9" width="6.0" height="6.0" fill="#ef8a3a" rx="1.2"/>
<rect x="92.1" y="695.9" width="6.0" height="6.0" fill="#ef8a3a" rx="1.2"/>
<rect x="101.1" y="685.9" width="3.5" height="3.5" fill="#f3b23a"/>
<circle cx="93.1" cy="672.9" r="1.8" fill="#1d5f9e"/>
<rect x="98.1" y="674.9" width="4.0" height="4.0" fill="#fff" stroke="#7fb3d6" stroke-width="0.8" rx="1"/>
<path d="M86.1 683.88 v-8 h6" fill="none" stroke="#cfe0ea" stroke-width="1"/>
<text x="14.2" y="741.1" fill="#555" style="font-size:13.5px;">8</text>
<rect x="26.1" y="729.9" width="92.0" height="53.0" fill="#ffffff" stroke="#c9c9c9" stroke-width="1"/>
<rect x="60.1" y="735.4" width="26.0" height="1.0" fill="#8c8c8c"/>
<rect x="30.1" y="739.9" width="41.0" height="36.0" fill="#e4ebf5"/>
<rect x="73.1" y="739.9" width="41.0" height="36.0" fill="#e4ebf5"/>
<rect x="31.1" y="741.4" width="38.0" height="0.8" fill="#7f8fa8"/>
<rect x="74.1" y="741.4" width="38.0" height="0.8" fill="#aab6c8"/>
<rect x="31.1" y="744.2" width="33.0" height="0.8" fill="#aab6c8"/>
<rect x="74.1" y="744.2" width="31.0" height="0.8" fill="#7f8fa8"/>
<rect x="31.1" y="747.0" width="37.0" height="0.8" fill="#aab6c8"/>
<rect x="74.1" y="747.0" width="34.0" height="0.8" fill="#aab6c8"/>
<rect x="31.1" y="749.8" width="32.0" height="0.8" fill="#7f8fa8"/>
<rect x="74.1" y="749.8" width="37.0" height="0.8" fill="#aab6c8"/>
<rect x="31.1" y="752.6" width="36.0" height="0.8" fill="#aab6c8"/>
<rect x="74.1" y="752.6" width="30.0" height="0.8" fill="#7f8fa8"/>
<rect x="31.1" y="755.4" width="31.0" height="0.8" fill="#aab6c8"/>
<rect x="74.1" y="755.4" width="33.0" height="0.8" fill="#aab6c8"/>
<rect x="31.1" y="758.2" width="35.0" height="0.8" fill="#7f8fa8"/>
<rect x="74.1" y="758.2" width="36.0" height="0.8" fill="#aab6c8"/>
<rect x="31.1" y="761.0" width="30.0" height="0.8" fill="#aab6c8"/>
<rect x="74.1" y="761.0" width="29.0" height="0.8" fill="#7f8fa8"/>
<rect x="31.1" y="763.8" width="34.0" height="0.8" fill="#aab6c8"/>
<rect x="74.1" y="763.8" width="32.0" height="0.8" fill="#aab6c8"/>
<rect x="31.1" y="766.6" width="38.0" height="0.8" fill="#7f8fa8"/>
<rect x="74.1" y="766.6" width="35.0" height="0.8" fill="#aab6c8"/>
<rect x="31.1" y="769.4" width="33.0" height="0.8" fill="#aab6c8"/>
<rect x="74.1" y="769.4" width="38.0" height="0.8" fill="#7f8fa8"/>
<rect x="31.1" y="772.2" width="37.0" height="0.8" fill="#aab6c8"/>
<rect x="74.1" y="772.2" width="31.0" height="0.8" fill="#aab6c8"/>
<text x="14.2" y="809.1" fill="#d24726" style="font-size:13.5px;">9</text>
<rect x="24.5" y="795.4" width="95.0" height="58.0" fill="none" stroke="#d24726" stroke-width="3"/>
<rect x="26.1" y="797.9" width="92.0" height="53.0" fill="#ffffff" stroke="#c9c9c9" stroke-width="1"/>
<rect x="57.1" y="803.4" width="34.0" height="1.0" fill="#8c8c8c"/>
<rect x="38.6" y="812.7" width="21.5" height="26.0" fill="#ffe599"/>
<rect x="28.1" y="805.4" width="42.5" height="16.0" fill="none" stroke="#e03030" stroke-width="1.1" rx="3"/>
<rect x="60.9" y="806.4" width="7.5" height="6.0" fill="#ffe599" stroke="#777" stroke-width="0.5"/>
<rect x="45.6" y="816.9" width="8.0" height="2.4" fill="#d5e8d4" stroke="#777" stroke-width="0.4"/>
<rect x="45.6" y="826.4" width="8.0" height="2.4" fill="#d5e8d4" stroke="#777" stroke-width="0.4"/>
<rect x="45.6" y="833.4" width="8.0" height="2.4" fill="#d5e8d4" stroke="#777" stroke-width="0.4"/>
<rect x="39.1" y="836.4" width="8.0" height="2.4" fill="#d5e8d4" stroke="#777" stroke-width="0.4"/>
<rect x="82.1" y="808.2" width="7.5" height="2.8" fill="#fff" stroke="#666" stroke-width="0.5"/>
<rect x="94.6" y="808.2" width="7.5" height="2.8" fill="#fff" stroke="#666" stroke-width="0.5"/>
<rect x="107.1" y="808.2" width="7.5" height="2.8" fill="#fff" stroke="#666" stroke-width="0.5"/>
<rect x="76.1" y="813.4" width="39.0" height="3.6" fill="none" stroke="#b08ac0" stroke-width="0.6"/>
<rect x="76.1" y="817.4" width="39.0" height="9.0" fill="none" stroke="#cfe3c4" stroke-width="0.6"/>
<rect x="76.1" y="828.4" width="39.0" height="4.5" fill="none" stroke="#9ab7dd" stroke-width="0.6"/>
<rect x="72.1" y="816.1" width="44.5" height="11.5" fill="none" stroke="#e03030" stroke-width="1.1" rx="2"/>
<rect x="85.1" y="837.9" width="22.0" height="0.8" fill="#cfcfcf"/>
<rect x="36.1" y="845.9" width="30.0" height="0.8" fill="#cfcfcf"/>
<text x="8.5" y="877.2" fill="#555" style="font-size:13.5px;" textLength="13.5" lengthAdjust="spacing">10</text>
<rect x="26.1" y="866.0" width="92.0" height="53.0" fill="#ffffff" stroke="#c9c9c9" stroke-width="1"/>
<rect x="52.1" y="871.5" width="42.0" height="1.0" fill="#8c8c8c"/>
<rect x="34.1" y="880.0" width="74.0" height="0.8" fill="#cfcfcf"/>
<rect x="34.1" y="882.6" width="72.0" height="0.8" fill="#cfcfcf"/>
<rect x="34.1" y="885.2" width="76.0" height="0.8" fill="#cfcfcf"/>
<rect x="34.1" y="887.8" width="70.0" height="0.8" fill="#cfcfcf"/>
<rect x="37.1" y="890.4" width="40.0" height="0.8" fill="#cfcfcf"/>
<rect x="37.1" y="893.0" width="44.0" height="0.8" fill="#cfcfcf"/>
<rect x="37.1" y="895.6" width="38.0" height="0.8" fill="#cfcfcf"/>
<rect x="37.1" y="898.2" width="42.0" height="0.8" fill="#cfcfcf"/>
<rect x="37.1" y="900.8" width="36.0" height="0.8" fill="#cfcfcf"/>
<rect x="37.1" y="903.4" width="40.0" height="0.8" fill="#cfcfcf"/>
<rect x="36.1" y="909.0" width="72.0" height="0.8" fill="#cfcfcf"/>
<rect x="34.1" y="911.6" width="76.0" height="0.8" fill="#cfcfcf"/>
<rect x="34.1" y="914.2" width="50.0" height="0.8" fill="#cfcfcf"/>
<text x="8.5" y="945.2" fill="#555" style="font-size:13.5px;" textLength="13.5" lengthAdjust="spacing">11</text>
<rect x="26.1" y="934.0" width="92.0" height="53.0" fill="#ffffff" stroke="#c9c9c9" stroke-width="1"/>
<rect x="46.1" y="939.5" width="54.0" height="1.0" fill="#8c8c8c"/>
<rect x="34.1" y="945.0" width="44.0" height="0.8" fill="#cfcfcf"/>
<rect x="34.1" y="947.7" width="39.0" height="0.8" fill="#cfcfcf"/>
<rect x="34.1" y="950.4" width="34.0" height="0.8" fill="#cfcfcf"/>
<rect x="34.1" y="953.1" width="41.0" height="0.8" fill="#cfcfcf"/>
<rect x="34.1" y="955.8" width="36.0" height="0.8" fill="#cfcfcf"/>
<rect x="34.1" y="958.5" width="43.0" height="0.8" fill="#cfcfcf"/>
<rect x="34.1" y="961.2" width="38.0" height="0.8" fill="#cfcfcf"/>
<rect x="34.1" y="963.9" width="33.0" height="0.8" fill="#cfcfcf"/>
<rect x="34.1" y="966.6" width="40.0" height="0.8" fill="#cfcfcf"/>
<rect x="34.1" y="969.3" width="35.0" height="0.8" fill="#cfcfcf"/>
<rect x="34.1" y="972.0" width="42.0" height="0.8" fill="#cfcfcf"/>
<rect x="34.1" y="974.7" width="37.0" height="0.8" fill="#cfcfcf"/>
<rect x="34.1" y="977.4" width="44.0" height="0.8" fill="#cfcfcf"/>
<rect x="34.1" y="980.1" width="39.0" height="0.8" fill="#cfcfcf"/>
<rect x="78.1" y="954.0" width="6.0" height="6.0" fill="#9c4fc0" rx="1.2"/>
<rect x="79.1" y="964.0" width="5.0" height="5.0" fill="#2f8fbf" rx="1"/>
<rect x="98.1" y="958.0" width="5.0" height="6.0" fill="#7fb3d6"/>
<rect x="110.1" y="956.0" width="4.0" height="4.0" fill="#f3b23a"/>
<ellipse cx="90.1" cy="960.0" rx="3.5" ry="2" fill="#5a6a76"/></g>
<rect x="133.6" y="240.0" width="12.0" height="732.0" fill="#e9e9e9"/>
<rect x="134.0" y="241.5" width="11.2" height="10.5" fill="#ffffff" stroke="#cfcfcf" stroke-width="1"/>
<path d="M137.3 248.3 l2.4 -2.6 l2.4 2.6 z" fill="#666"/>
<rect x="134.0" y="252.0" width="11.2" height="358.4" fill="#ffffff" stroke="#cfcfcf" stroke-width="1"/>
<rect x="134.0" y="960.0" width="11.2" height="11.3" fill="#ffffff" stroke="#cfcfcf" stroke-width="1"/>
<path d="M137.3 964.3 l2.4 2.6 l2.4 -2.6 z" fill="#666"/>
<line x1="149.5" y1="240.0" x2="149.5" y2="974.0" stroke="#e3e3e3" stroke-width="1"/>
<rect x="5.0" y="974.3" width="1604.0" height="18.2" fill="#d24726"/>
<text x="11.0" y="986.2" fill="#ffffff" style="font-size:8.8px;" textLength="65.0" lengthAdjust="spacing">СЛАЙД 9 ИЗ 21</text>
<path d="M95.5 979.5 h3.5 v8 h-3.5 z M99.5 979.5 h3.5 v3 M100.5 987 l4.5 -5" fill="none" stroke="#ffffff" stroke-width="0.9"/>
<text x="118.0" y="986.2" fill="#ffffff" style="font-size:8.8px;" textLength="58.0" lengthAdjust="spacing">УКРАИНСКИЙ</text>
<path d="M1148.5 985.5 h8 M1148.5 988 h8 M1149.5 983 h6 M1152.5 979 l2 2.5 h-4 z" fill="none" stroke="#ffffff" stroke-width="0.9"/>
<text x="1160.9" y="986.4" fill="#ffffff" style="font-size:8.8px;" textLength="41.5" lengthAdjust="spacing">ЗАМЕТКИ</text>
<path d="M1220 979.5 h9 v6 h-5 l-2 2.5 v-2.5 h-2 z" fill="#ffffff"/>
<text x="1233.3" y="986.4" fill="#ffffff" style="font-size:8.8px;" textLength="63.0" lengthAdjust="spacing">ПРИМЕЧАНИЯ</text>
<rect x="1312.5" y="974.3" width="31.3" height="18.2" fill="#b83b1d"/>
<rect x="1322.8" y="978.3" width="10.5" height="9.5" fill="none" stroke="#ffffff" stroke-width="1.2"/>
<rect x="1327.0" y="980.5" width="4.3" height="3.0" fill="#ffffff"/>
<line x1="1325.0" y1="978.3" x2="1325.0" y2="987.8" stroke="#ffffff" stroke-width="1"/>
<rect x="1354.0" y="978.3" width="4.8" height="4.2" fill="#ffffff"/>
<rect x="1360.2" y="978.3" width="4.8" height="4.2" fill="#ffffff"/>
<rect x="1354.0" y="983.9" width="4.8" height="4.2" fill="#ffffff"/>
<rect x="1360.2" y="983.9" width="4.8" height="4.2" fill="#ffffff"/>
<path d="M1386 979.5 h4.5 v8 h-4.5 z M1391.5 979.5 h4.5 v8 h-4.5 z" fill="none" stroke="#ffffff" stroke-width="0.9"/>
<path d="M1387 981.5 h2.5 M1387 983.5 h2.5 M1387 985.5 h2.5 M1392.5 981.5 h2.5 M1392.5 983.5 h2.5 M1392.5 985.5 h2.5" fill="none" stroke="#ffffff" stroke-width="0.6"/>
<path d="M1417.5 979 h11 M1418.5 979.5 v5 h9 v-5 M1423 984.5 v2.5 M1420.5 987.8 h5" fill="none" stroke="#ffffff" stroke-width="1"/>
<rect x="1443.5" y="983.0" width="4.0" height="1.3" fill="#ffffff"/>
<line x1="1452.0" y1="983.6" x2="1535.0" y2="983.6" stroke="#f3c9bc" stroke-width="1"/>
<rect x="1495.0" y="979.0" width="2.4" height="9.5" fill="#ffffff"/>
<path d="M1539.5 983.6 h6 M1542.5 980.6 v6" fill="none" stroke="#ffffff" stroke-width="1.4"/>
<text x="1560.0" y="986.6" fill="#ffffff" style="font-size:9px;" textLength="24.5" lengthAdjust="spacing">116 %</text>
<rect x="1594.5" y="978.0" width="11.0" height="10.5" fill="none" stroke="#ffffff" stroke-width="1"/>
<path d="M1596.5 980 l2.5 2.5 M1603.5 980 l-2.5 2.5 M1596.5 986.5 l2.5 -2.5 M1603.5 986.5 l-2.5 -2.5" fill="none" stroke="#ffffff" stroke-width="1"/>
</g>
<g id="s4_slide">
<g filter="url(#b05)">
<text x="665.3" y="324.3" fill="#111" style="font-size:36px;font-family:'Liberation Serif',serif;" textLength="487.9" lengthAdjust="spacing">Взаємодія компонентів системи</text>
<rect x="724.6" y="360.6" width="107.3" height="78.6" fill="#ffe599" stroke="#3a3a3a" stroke-width="1.1"/>
<text x="735.0" y="372.2" fill="#1a1a1a" style="font-size:9.2px;font-weight:700;" textLength="71.3" lengthAdjust="spacing">&lt;&lt;component&gt;&gt;</text>
<text x="747.3" y="383.2" fill="#1a1a1a" style="font-size:9.2px;font-weight:700;" textLength="46.1" lengthAdjust="spacing">IoT device</text>
<rect x="819.4" y="364.4" width="8.0" height="14.0" fill="none" stroke="#3a3a3a" stroke-width="1"/>
<rect x="816.9" y="366.9" width="5.0" height="3.0" fill="#fff0" stroke="#3a3a3a" stroke-width="1"/>
<rect x="816.9" y="372.4" width="5.0" height="3.0" fill="#fff0" stroke="#3a3a3a" stroke-width="1"/>
<rect x="423.7" y="450.7" width="289.3" height="420.1" fill="#ffe599" stroke="#3a3a3a" stroke-width="1.1"/>
<text x="525.0" y="463.0" fill="#1a1a1a" style="font-size:9.2px;font-weight:700;" textLength="71.0" lengthAdjust="spacing">&lt;&lt;component&gt;&gt;</text>
<text x="535.9" y="473.8" fill="#1a1a1a" style="font-size:9.2px;font-weight:700;" textLength="49.6" lengthAdjust="spacing">AWS Cloud</text>
<rect x="700.5" y="455.0" width="8.0" height="14.0" fill="none" stroke="#3a3a3a" stroke-width="1"/>
<rect x="698.0" y="457.5" width="5.0" height="3.0" fill="#fff0" stroke="#3a3a3a" stroke-width="1"/>
<rect x="698.0" y="463.0" width="5.0" height="3.0" fill="#fff0" stroke="#3a3a3a" stroke-width="1"/>
<path d="M423.7 519.6 H712.3 H742 Q749 519.6 749 512.6 V439.2" fill="none" stroke="#4f4f4f" stroke-width="1.3"/>
<path d="M795.2 439.2 V644.5 Q795.2 652.1 787.6 652.1 H621.1" fill="none" stroke="#4f4f4f" stroke-width="1.3"/>
<path d="M568 667.4 V728.6" fill="none" stroke="#4f4f4f" stroke-width="1.3"/>
<path d="M515.2 742.9 H489 Q481.7 742.9 481.7 750 V771.9" fill="none" stroke="#4f4f4f" stroke-width="1.3"/>
<path d="M621.1 742.9 H644.5 Q651.9 742.9 651.9 750 V815.5 Q651.9 823 644.5 823 H621.1" fill="none" stroke="#4f4f4f" stroke-width="1.3"/>
<circle cx="312.2" cy="502.1" r="6.0" fill="#c9a0c9" stroke="#3a3a3a" stroke-width="1"/>
<path d="M312.2 508.1 V528.3 M300.7 515.4 H324 M312.2 528.3 L300.7 543 M312.2 528.3 L324 543" fill="none" stroke="#3a3a3a" stroke-width="1"/>
<text x="301.4" y="556.3" fill="#1a1a1a" style="font-size:9px;" textLength="21.3" lengthAdjust="spacing">Actor</text>
<path d="M324 519.6 H418" fill="none" stroke="#3a3a3a" stroke-width="1" stroke-dasharray="4 3"/>
<path d="M411 515.8 L418.6 519.6 L411 523.4" fill="none" stroke="#3a3a3a" stroke-width="1"/>
<circle cx="469.1" cy="519.6" r="8.0" fill="#f8cecc" stroke="#444" stroke-width="1.2"/>
<text x="450.6" y="541.2" fill="#1a1a1a" style="font-size:9.2px;font-weight:700;" textLength="37.0" lengthAdjust="spacing">Request</text>
<rect x="515.2" y="504.5" width="106.3" height="31.1" fill="#d5e8d4" stroke="#3a3a3a" stroke-width="1.1"/>
<text x="525.0" y="516.1" fill="#1a1a1a" style="font-size:9.2px;font-weight:700;" textLength="71.0" lengthAdjust="spacing">&lt;&lt;component&gt;&gt;</text>
<text x="527.8" y="527.1" fill="#1a1a1a" style="font-size:9.2px;font-weight:700;" textLength="64.7" lengthAdjust="spacing">:Topic/Subs UI</text>
<rect x="609.0" y="508.3" width="8.0" height="14.0" fill="none" stroke="#3a3a3a" stroke-width="1"/>
<rect x="606.5" y="510.8" width="5.0" height="3.0" fill="#fff0" stroke="#3a3a3a" stroke-width="1"/>
<rect x="606.5" y="516.3" width="5.0" height="3.0" fill="#fff0" stroke="#3a3a3a" stroke-width="1"/>
<path d="M665.9 531.6 A12 12 0 0 1 665.9 507.6" fill="none" stroke="#4a4a4a" stroke-width="1.25"/>
<circle cx="666.9" cy="519.6" r="8.0" fill="#f8cecc" stroke="#444" stroke-width="1.2"/>
<text x="621.1" y="541.2" fill="#1a1a1a" style="font-size:9.2px;font-weight:700;" textLength="91.9" lengthAdjust="spacing">Send message to IoT</text>
<rect x="419.1" y="515.0" width="9.2" height="9.2" fill="#a9c4eb" stroke="#44546a" stroke-width="1"/>
<rect x="510.6" y="515.0" width="9.2" height="9.2" fill="#a9c4eb" stroke="#44546a" stroke-width="1"/>
<rect x="616.5" y="515.0" width="9.2" height="9.2" fill="#a9c4eb" stroke="#44546a" stroke-width="1"/>
<rect x="707.7" y="515.0" width="9.2" height="9.2" fill="#a9c4eb" stroke="#44546a" stroke-width="1"/>
<path d="M761.3 479.8 A12 12 0 0 1 737.3 479.8" fill="none" stroke="#4a4a4a" stroke-width="1.25"/>
<circle cx="749.3" cy="478.8" r="8.0" fill="#ffdf80" stroke="#444" stroke-width="1.2"/>
<text x="731.2" y="500.4" fill="#1a1a1a" style="font-size:9.2px;font-weight:700;" textLength="36.4" lengthAdjust="spacing">Request</text>
<path d="M795.6 492.3 A12 12 0 0 1 795.6 516.3" fill="none" stroke="#4a4a4a" stroke-width="1.25"/>
<circle cx="794.6" cy="504.3" r="8.0" fill="#d5e8d4" stroke="#444" stroke-width="1.2"/>
<line x1="783.0" y1="504.3" x2="786.4" y2="504.3" stroke="#3a3a3a" stroke-width="1.1"/>
<line x1="795.2" y1="492.0" x2="795.2" y2="516.5" stroke="#4f4f4f" stroke-width="1.3"/>
<path d="M795.2 496.5 q0 7 -7.5 7.5" fill="none" stroke="#4f4f4f" stroke-width="1"/>
<text x="753.2" y="525.9" fill="#1a1a1a" style="font-size:9.2px;font-weight:700;" textLength="79.7" lengthAdjust="spacing">Response to AWS</text>
<rect x="515.2" y="636.3" width="106.3" height="31.5" fill="#d5e8d4" stroke="#3a3a3a" stroke-width="1.1"/>
<text x="525.0" y="647.9" fill="#1a1a1a" style="font-size:9.2px;font-weight:700;" textLength="71.0" lengthAdjust="spacing">&lt;&lt;component&gt;&gt;</text>
<text x="534.8" y="658.9" fill="#1a1a1a" style="font-size:9.2px;font-weight:700;" textLength="52.4" lengthAdjust="spacing">:Topic/Subs</text>
<rect x="609.0" y="640.1" width="8.0" height="14.0" fill="none" stroke="#3a3a3a" stroke-width="1"/>
<rect x="606.5" y="642.6" width="5.0" height="3.0" fill="#fff0" stroke="#3a3a3a" stroke-width="1"/>
<rect x="606.5" y="648.1" width="5.0" height="3.0" fill="#fff0" stroke="#3a3a3a" stroke-width="1"/>
<path d="M665.9 664.1 A12 12 0 0 1 665.9 640.1" fill="none" stroke="#4a4a4a" stroke-width="1.25"/>
<circle cx="666.9" cy="652.1" r="8.0" fill="#f8cecc" stroke="#444" stroke-width="1.2"/>
<text x="633.7" y="672.7" fill="#1a1a1a" style="font-size:9.2px;font-weight:700;" textLength="67.1" lengthAdjust="spacing">Meesage query</text>
<rect x="616.5" y="647.5" width="9.2" height="9.2" fill="#a9c4eb" stroke="#44546a" stroke-width="1"/>
<rect x="707.7" y="647.5" width="9.2" height="9.2" fill="#a9c4eb" stroke="#44546a" stroke-width="1"/>
<rect x="563.4" y="662.8" width="9.2" height="9.2" fill="#a9c4eb" stroke="#44546a" stroke-width="1"/>
<path d="M556.0 696.8 A12 12 0 0 1 580.0 696.8" fill="none" stroke="#4a4a4a" stroke-width="1.25"/>
<circle cx="568.0" cy="697.8" r="8.0" fill="#f8cecc" stroke="#444" stroke-width="1.2"/>
<text x="535.5" y="718.1" fill="#1a1a1a" style="font-size:9.2px;font-weight:700;" textLength="65.0" lengthAdjust="spacing">Triger function</text>
<rect x="515.2" y="728.3" width="106.3" height="31.4" fill="#d5e8d4" stroke="#3a3a3a" stroke-width="1.1"/>
<text x="525.0" y="739.9" fill="#1a1a1a" style="font-size:9.2px;font-weight:700;" textLength="71.0" lengthAdjust="spacing">&lt;&lt;component&gt;&gt;</text>
<text x="517.3" y="750.9" fill="#1a1a1a" style="font-size:9.2px;font-weight:700;" textLength="88.1" lengthAdjust="spacing">:Serverless solution</text>
<rect x="609.0" y="732.1" width="8.0" height="14.0" fill="none" stroke="#3a3a3a" stroke-width="1"/>
<rect x="606.5" y="734.6" width="5.0" height="3.0" fill="#fff0" stroke="#3a3a3a" stroke-width="1"/>
<rect x="606.5" y="740.1" width="5.0" height="3.0" fill="#fff0" stroke="#3a3a3a" stroke-width="1"/>
<rect x="563.4" y="724.0" width="9.2" height="9.2" fill="#a9c4eb" stroke="#44546a" stroke-width="1"/>
<rect x="510.6" y="738.3" width="9.2" height="9.2" fill="#a9c4eb" stroke="#44546a" stroke-width="1"/>
<rect x="616.5" y="738.3" width="9.2" height="9.2" fill="#a9c4eb" stroke="#44546a" stroke-width="1"/>
<rect x="428.2" y="771.9" width="106.6" height="31.5" fill="#d5e8d4" stroke="#3a3a3a" stroke-width="1.1"/>
<text x="438.0" y="783.5" fill="#1a1a1a" style="font-size:9.2px;font-weight:700;" textLength="71.0" lengthAdjust="spacing">&lt;&lt;component&gt;&gt;</text>
<text x="449.9" y="794.5" fill="#1a1a1a" style="font-size:9.2px;font-weight:700;" textLength="47.5" lengthAdjust="spacing">:logs store</text>
<rect x="522.3" y="775.7" width="8.0" height="14.0" fill="none" stroke="#3a3a3a" stroke-width="1"/>
<rect x="519.8" y="778.2" width="5.0" height="3.0" fill="#fff0" stroke="#3a3a3a" stroke-width="1"/>
<rect x="519.8" y="783.7" width="5.0" height="3.0" fill="#fff0" stroke="#3a3a3a" stroke-width="1"/>
<rect x="477.1" y="767.3" width="9.2" height="9.2" fill="#a9c4eb" stroke="#44546a" stroke-width="1"/>
<path d="M639.9 775.5 A12 12 0 0 1 663.9 775.5" fill="none" stroke="#4a4a4a" stroke-width="1.25"/>
<circle cx="651.9" cy="776.5" r="8.0" fill="#f8cecc" stroke="#444" stroke-width="1.2"/>
<text x="619.4" y="796.8" fill="#1a1a1a" style="font-size:9.2px;font-weight:700;" textLength="65.0" lengthAdjust="spacing">Store message</text>
<rect x="515.2" y="807.6" width="106.3" height="31.4" fill="#d5e8d4" stroke="#3a3a3a" stroke-width="1.1"/>
<text x="525.0" y="819.2" fill="#1a1a1a" style="font-size:9.2px;font-weight:700;" textLength="71.0" lengthAdjust="spacing">&lt;&lt;component&gt;&gt;</text>
<text x="540.0" y="830.2" fill="#1a1a1a" style="font-size:9.2px;font-weight:700;" textLength="41.0" lengthAdjust="spacing">:DB store</text>
<rect x="609.0" y="811.4" width="8.0" height="14.0" fill="none" stroke="#3a3a3a" stroke-width="1"/>
<rect x="606.5" y="813.9" width="5.0" height="3.0" fill="#fff0" stroke="#3a3a3a" stroke-width="1"/>
<rect x="606.5" y="819.4" width="5.0" height="3.0" fill="#fff0" stroke="#3a3a3a" stroke-width="1"/>
<rect x="616.5" y="818.4" width="9.2" height="9.2" fill="#a9c4eb" stroke="#44546a" stroke-width="1"/>
<rect x="928.8" y="461.6" width="526.0" height="47.5" fill="#ffffff" stroke="#a978b8" stroke-width="1.1"/>
<rect x="928.8" y="513.7" width="526.0" height="118.5" fill="#ffffff" stroke="#cfe3c4" stroke-width="1.1"/>
<rect x="928.6" y="661.8" width="526.0" height="60.2" fill="#ffffff" stroke="#9ab7dd" stroke-width="1.1"/>
<rect x="1006.8" y="389.0" width="101.3" height="35.9" fill="#ffffff" stroke="#2c2c2c" stroke-width="1.4"/>
<text x="1016.6" y="411.4" fill="#1a1a1a" style="font-size:14px;" textLength="81.0" lengthAdjust="spacing">IoT Controller</text>
<rect x="1174.5" y="389.0" width="101.4" height="35.9" fill="#ffffff" stroke="#2c2c2c" stroke-width="1.4"/>
<text x="1183.3" y="411.4" fill="#1a1a1a" style="font-size:14px;" textLength="82.8" lengthAdjust="spacing">Cloud Service</text>
<rect x="1342.3" y="389.0" width="101.3" height="35.9" fill="#ffffff" stroke="#2c2c2c" stroke-width="1.4"/>
<text x="1363.9" y="411.4" fill="#1a1a1a" style="font-size:14px;" textLength="57.0" lengthAdjust="spacing">Database</text>
<line x1="1057.4" y1="425.0" x2="1057.4" y2="543.4" stroke="#2a2a2a" stroke-width="1.2" stroke-dasharray="13.5 15" stroke-dashoffset="9.3"/>
<line x1="1057.4" y1="605.2" x2="1057.4" y2="733.0" stroke="#2a2a2a" stroke-width="1.2" stroke-dasharray="13.5 15"/>
<line x1="1225.2" y1="425.0" x2="1225.2" y2="733.0" stroke="#2a2a2a" stroke-width="1.2" stroke-dasharray="13.5 15" stroke-dashoffset="9.3"/>
<line x1="1392.9" y1="425.0" x2="1392.9" y2="733.0" stroke="#2a2a2a" stroke-width="1.2" stroke-dasharray="13.5 15" stroke-dashoffset="9.3"/>
<rect x="1220.0" y="462.3" width="10.4" height="46.1" fill="#e1d5e7" stroke="#a978b8" stroke-width="1.1"/>
<text x="953.3" y="478.7" fill="#1a1a1a" style="font-size:11.6px;" textLength="51.0" lengthAdjust="spacing">UI request</text>
<line x1="962.4" y1="484.0" x2="1214.0" y2="484.0" stroke="#b26fc0" stroke-width="1.2"/>
<path d="M1220 484 l-9.5 -4.2 l2.2 4.2 l-2.2 4.2 z" fill="#b26fc0"/>
<line x1="1220.0" y1="496.2" x2="968.4" y2="496.2" stroke="#c2559d" stroke-width="1.2"/>
<path d="M962.4 496.2 l9.5 -4.2 l-2.2 4.2 l2.2 4.2 z" fill="#c2559d"/>
<path d="M1230.4 491 H1247.9 V479.8 H1238" fill="none" stroke="#a978b8" stroke-width="1.1"/>
<path d="M1232 479.8 l8.5 -3.8 l-2 3.8 l2 3.8 z" fill="#a978b8"/>
<text x="1277.6" y="480.8" fill="#1a1a1a" style="font-size:11.6px;" textLength="30.8" lengthAdjust="spacing">Check</text>
<text x="1258.4" y="494.5" fill="#1a1a1a" style="font-size:11.6px;" textLength="68.8" lengthAdjust="spacing">authentication</text>
<text x="942.1" y="526.3" fill="#1a1a1a" style="font-size:11.6px;" textLength="72.7" lengthAdjust="spacing">Request to IoT</text>
<line x1="962.4" y1="531.5" x2="1214.0" y2="531.5" stroke="#82b366" stroke-width="1.2"/>
<path d="M1220 531.5 l-9.5 -4.2 l2.2 4.2 l-2.2 4.2 z" fill="#82b366"/>
<rect x="1220.0" y="520.0" width="10.4" height="44.7" fill="#d5e8d4" stroke="#82b366" stroke-width="1.1"/>
<rect x="1051.9" y="543.4" width="11.5" height="59.4" fill="#d5e8d4" stroke="#82b366" stroke-width="1.1"/>
<line x1="1220.0" y1="557.4" x2="1070.5" y2="557.4" stroke="#82b366" stroke-width="1.2"/>
<path d="M1064.5 557.4 l9.5 -4.2 l-2.2 4.2 l2.2 4.2 z" fill="#82b366"/>
<text x="930.9" y="560.2" fill="#1a1a1a" style="font-size:11.6px;" textLength="71.7" lengthAdjust="spacing">Check request</text>
<path d="M1051.9 561.2 H1006.8 V579.4 H1042" fill="none" stroke="#82b366" stroke-width="1.2"/>
<path d="M1048.7 579.4 l-9.5 -4.2 l2.2 4.2 l-2.2 4.2 z" fill="#82b366"/>
<text x="1076.7" y="586.4" fill="#1a1a1a" style="font-size:11.6px;" textLength="93.6" lengthAdjust="spacing">Response from IoT</text>
<line x1="1063.4" y1="590.4" x2="1214.0" y2="591.6" stroke="#82b366" stroke-width="1.2"/>
<path d="M1220 591.6 l-9.5 -4.2 l2.2 4.2 l-2.2 4.2 z" fill="#82b366"/>
<rect x="1220.0" y="579.4" width="10.4" height="44.4" fill="#d5e8d4" stroke="#82b366" stroke-width="1.1"/>
<text x="1255.2" y="596.9" fill="#1a1a1a" style="font-size:11.6px;" textLength="69.9" lengthAdjust="spacing">Store IoT data</text>
<line x1="1230.4" y1="601.4" x2="1381.2" y2="601.4" stroke="#82b366" stroke-width="1.2"/>
<path d="M1387.2 601.4 l-9.5 -4.2 l2.2 4.2 l-2.2 4.2 z" fill="#82b366"/>
<rect x="1387.7" y="579.4" width="10.8" height="44.4" fill="#d5e8d4" stroke="#82b366" stroke-width="1.1"/>
<text x="942.0" y="680.8" fill="#1a1a1a" style="font-size:11.6px;" textLength="72.4" lengthAdjust="spacing">Request to DB</text>
<line x1="962.1" y1="686.3" x2="1381.0" y2="686.3" stroke="#7f9fd0" stroke-width="1.2"/>
<path d="M1387 686.3 l-9.5 -4.2 l2.2 4.2 l-2.2 4.2 z" fill="#7f9fd0"/>
<text x="942.0" y="704.5" fill="#1a1a1a" style="font-size:11.6px;" textLength="94.2" lengthAdjust="spacing">Response from DB</text>
<line x1="1387.0" y1="710.5" x2="968.1" y2="710.5" stroke="#7f9fd0" stroke-width="1.2"/>
<path d="M962.1 710.5 l9.5 -4.2 l-2.2 4.2 l2.2 4.2 z" fill="#7f9fd0"/>
<rect x="1387.3" y="671.7" width="11.5" height="44.7" fill="#dae8fc" stroke="#9ab7dd" stroke-width="1.1"/>
<circle cx="900.9" cy="505.0" r="8.4" fill="#ffffff" stroke="#222" stroke-width="1.2"/>
<path d="M900.9 513.4 V542.7 M883.8 519.6 H917.7 M900.9 542.7 L883.8 567.2 M900.9 542.7 L917.7 567.2" fill="none" stroke="#222" stroke-width="1.2"/>
<text x="885.5" y="587.4" fill="#1a1a1a" style="font-size:14px;" textLength="31.1" lengthAdjust="spacing">Actor</text>
<rect x="274.3" y="348.3" width="580.3" height="213.2" fill="none" stroke="#d82323" stroke-width="1.9" rx="36"/>
<rect x="872.2" y="494.5" width="603.6" height="154.8" fill="none" stroke="#d82323" stroke-width="1.9" rx="26"/>
<text x="389.8" y="911.0" fill="#111" style="font-size:24px;font-family:'Liberation Serif',serif;" textLength="399.4" lengthAdjust="spacing">UML Діаграма компонентів IoT системи</text>
<path d="M670 915.5 q1.5 -1.6 3 0 t3 0 t3 0 t3 0 t3 0 t3 0 t3 0 t3 0 t3 0 t3 0" fill="none" stroke="#e04040" stroke-width="0.8"/>
<text x="1052.0" y="801.5" fill="#111" style="font-size:24px;font-family:'Liberation Serif',serif;" textLength="290.2" lengthAdjust="spacing">UML Діаграма послідовності</text>
<text x="1455.0" y="925.0" fill="#111" style="font-size:24px;font-family:'Liberation Serif',serif;" textLength="21.8" lengthAdjust="spacing">10</text>
</g>
<text x="1170.0" y="929.0" fill="#bdbdbd" style="font-size:16.5px;" textLength="153.2" lengthAdjust="spacing">Активация Windows</text>
<text x="1170.0" y="946.8" fill="#c4c4c4" style="font-size:12.4px;" textLength="379.6" lengthAdjust="spacing">Чтобы активировать Windows, перейдите в раздел "Параметры".</text>
</g>
<g id="s5_bottom" filter="url(#b03)">
<linearGradient id="tbg" x1="0" y1="0" x2="1" y2="0"><stop offset="0" stop-color="#24333f"/><stop offset="0.55" stop-color="#1f2f42"/><stop offset="1" stop-color="#182848"/></linearGradient>
<rect x="5.0" y="992.3" width="1604.0" height="32.7" fill="url(#tbg)"/>
<rect x="5.0" y="992.3" width="39.0" height="32.7" fill="#2a3946"/>
<rect x="16.7" y="1002.0" width="6.6" height="6.6" fill="#c9d2d9"/>
<rect x="24.3" y="1002.0" width="6.6" height="6.6" fill="#c9d2d9"/>
<rect x="16.7" y="1009.6" width="6.6" height="6.6" fill="#c9d2d9"/>
<rect x="24.3" y="1009.6" width="6.6" height="6.6" fill="#c9d2d9"/>
<rect x="44.0" y="993.5" width="241.0" height="31.2" fill="#ffffff"/>
<circle cx="63.5" cy="1008.0" r="4.6" fill="none" stroke="#444" stroke-width="1.3"/>
<line x1="60.2" y1="1011.5" x2="55.5" y2="1016.5" stroke="#444" stroke-width="1.5"/>
<text x="78.0" y="1013.8" fill="#777" style="font-size:14px;" textLength="36.0" lengthAdjust="spacing">Поиск</text>
<path d="M219 1024.7 L246 1003 L285 1010 L285 1024.7 Z" fill="#ecd1a4"/>
<path d="M232 1003.5 l17 -5 l4 13 l-17 5 z" fill="#e9e4d2" stroke="#5f9e58" stroke-width="1.6"/>
<rect x="260.0" y="997.0" width="16.0" height="23.0" fill="#2f57d0" rx="3"/>
<rect x="263.5" y="994.5" width="9.0" height="5.0" fill="#1f3f9e" rx="1.5"/>
<path d="M298 1000.5 h13 M299.5 1004.5 h9.5 v10.5 h-9.5 z M311.5 1004.5 v10.5" fill="none" stroke="#dfe6ea" stroke-width="1.2"/>
<rect x="338.0" y="1004.5" width="18.5" height="14.5" fill="#f2f4f5" rx="1.5"/>
<path d="M343 1004.5 v-2 a2 2 0 0 1 2 -2 h4.5 a2 2 0 0 1 2 2 v2" fill="none" stroke="#f2f4f5" stroke-width="1.3"/>
<rect x="343.3" y="1007.5" width="3.4" height="3.4" fill="#f25022"/>
<rect x="347.8" y="1007.5" width="3.4" height="3.4" fill="#7fba00"/>
<rect x="343.3" y="1012.0" width="3.4" height="3.4" fill="#00a4ef"/>
<rect x="347.8" y="1012.0" width="3.4" height="3.4" fill="#ffb900"/>
<circle cx="389.2" cy="1009.0" r="10.4" fill="#f2c318"/>
<path d="M389.2 1009 L380.2 1003.8 A10.4 10.4 0 0 1 398.2 1003.8 Z" fill="#e24234"/>
<path d="M389.2 1009 L380.2 1003.8 A10.4 10.4 0 0 0 389.2 1019.4 Z" fill="#2fa24f"/>
<circle cx="389.2" cy="1009.0" r="4.9" fill="#ffffff"/>
<circle cx="389.2" cy="1009.0" r="3.8" fill="#4285f4"/>
<path d="M420.4 1003 h7 l2 2 h10.2 v12 h-19.2 z" fill="#f6c84a"/>
<rect x="420.4" y="1006.0" width="19.2" height="9.0" fill="#fbd965"/>
<rect x="426.0" y="1011.5" width="8.0" height="5.8" fill="#3f8fd8"/>
<rect x="428.5" y="1014.0" width="3.0" height="3.3" fill="#1f3040"/>
<rect x="461.0" y="1005.5" width="21.0" height="12.8" fill="#2a8be0"/>
<path d="M461 1005.5 l10.5 -5.5 l10.5 5.5 l-10.5 7 z" fill="#1f6fc4"/>
<path d="M461 1018.3 l10.5 -7.5 l10.5 7.5 z" fill="#57b2f3"/>
<circle cx="512.5" cy="1009.0" r="10.4" fill="#1f86d9"/>
<path d="M502.5 1007 A10.4 10.4 0 0 1 522.9 1008 c0 5 -6 6 -9 3 c1 -6 -5 -9 -11.4 -4 z" fill="#41c98f"/>
<circle cx="511.5" cy="1011.5" r="4.6" fill="#22313f"/>
<circle cx="506.3" cy="1014.8" r="4.3" fill="#bdbdbd"/>
<circle cx="506.3" cy="1013.6" r="1.6" fill="#8a8a8a"/>
<rect x="549.0" y="1001.5" width="14.5" height="14.0" fill="#2a8be0" rx="1.5"/>
<rect x="556.0" y="1001.5" width="7.5" height="7.0" fill="#63b7f5"/>
<rect x="543.5" y="1004.0" width="11.5" height="11.5" fill="#1066bd" rx="1.5"/>
<text x="546.2" y="1013.2" fill="#ffffff" style="font-size:9px;font-weight:700;">O</text>
<circle cx="558.0" cy="1014.3" r="6.4" fill="#e2552a"/>
<text x="554.6" y="1017.3" fill="#ffffff" style="font-size:8px;font-weight:700;">M</text>
<path d="M594.4 999 l8.5 5 v10 l-8.5 5 l-8.5 -5 v-10 z" fill="#7a5fe0"/>
<path d="M594.4 999 l8.5 5 l-8.5 5 l-8.5 -5 z" fill="#4fa8f0"/>
<path d="M594.4 1009 l8.5 5 l-8.5 5 z" fill="#c46ad8"/>
<circle cx="594.4" cy="1009.0" r="3.3" fill="#22313f"/>
<circle cx="637.5" cy="1001.8" r="2.8" fill="#7b83eb"/>
<circle cx="643.5" cy="1003.3" r="2.1" fill="#5b5fc7"/>
<rect x="632.0" y="1004.5" width="11.0" height="11.0" fill="#7b83eb" rx="1.8"/>
<rect x="639.0" y="1005.5" width="7.0" height="8.0" fill="#5b5fc7" rx="1.5"/>
<rect x="624.6" y="1002.8" width="11.5" height="11.5" fill="#4b53bc" rx="1.3"/>
<text x="627.7" y="1012.4" fill="#ffffff" style="font-size:9.5px;font-weight:700;">T</text>
<rect x="626.0" y="1014.5" width="7.0" height="4.5" fill="#30d5c8"/>
<circle cx="640.6" cy="1014.8" r="6.3" fill="#ffffff"/>
<circle cx="640.6" cy="1014.8" r="5.2" fill="#d0262e"/>
<rect x="637.5" y="1014.1" width="6.2" height="1.5" fill="#ffffff"/>
<rect x="656.2" y="992.3" width="40.7" height="32.7" fill="#4c5b67"/>
<path d="M668 1001.5 l11 -2 v19 l-11 -2 z" fill="#d24726"/>
<rect x="678.0" y="1002.0" width="8.5" height="13.0" fill="#f6d9cf" stroke="#d24726" stroke-width="1"/>
<text x="669.6" y="1013.0" fill="#ffffff" style="font-size:9.5px;font-weight:700;">P</text>
<rect x="413.7" y="1023.4" width="33.2" height="1.6" fill="#76b9ed"/>
<rect x="495.4" y="1023.4" width="33.3" height="1.6" fill="#76b9ed"/>
<rect x="536.7" y="1023.4" width="33.3" height="1.6" fill="#76b9ed"/>
<rect x="619.0" y="1023.4" width="32.7" height="1.6" fill="#76b9ed"/>
<rect x="656.2" y="1023.4" width="40.7" height="1.6" fill="#76b9ed"/>
<path d="M1318 1016.3 a4.8 4.8 0 0 1 0.8 -9.5 a6.4 6.4 0 0 1 12.2 1.5 a4 4 0 0 1 -0.6 8 z" fill="#dfeaf7"/>
<path d="M1316 1016.3 a3.6 3.6 0 0 1 0.5 -7 a5 5 0 0 1 6 -2.6 a6 6 0 0 0 -3 9.6 z" fill="#9dc2ea"/>
<text x="1340.4" y="1013.4" fill="#ffffff" style="font-size:12px;" textLength="22.2" lengthAdjust="spacing">-6°C</text>
<text x="1370.3" y="1013.4" fill="#ffffff" style="font-size:12px;" textLength="36.3" lengthAdjust="spacing">Cloudy</text>
<path d="M1427.3 1011.5 l5 -5 l5 5" fill="none" stroke="#ffffff" stroke-width="1.2"/>
<rect x="1449.6" y="1001.5" width="4.6" height="9.0" fill="#ffffff" rx="2.3"/>
<path d="M1447.8 1008 a4.1 4.1 0 0 0 8.2 0 M1451.9 1012.2 v3 M1449.5 1015.6 h4.8" fill="none" stroke="#ffffff" stroke-width="1"/>
<path d="M1468 1003.5 h11 v7.5 h-11 z M1471 1014.5 h5 M1473.5 1011 v3.5 M1465.8 1006 v8.5 h3" fill="none" stroke="#ffffff" stroke-width="1.1"/>
<text x="1487.7" y="1013.0" fill="#ffffff" style="font-size:10.6px;" textLength="18.3" lengthAdjust="spacing">ENG</text>
<text x="1528.3" y="1004.9" fill="#ffffff" style="font-size:10.6px;" textLength="22.7" lengthAdjust="spacing">11:09</text>
<text x="1517.6" y="1019.8" fill="#ffffff" style="font-size:10.6px;" textLength="45.4" lengthAdjust="spacing">07.12.2023</text>
<path d="M1577.8 1003 h13 v9.5 h-4.5 l-2 2.6 l-2 -2.6 h-4.5 z" fill="none" stroke="#ffffff" stroke-width="1.1"/>
<rect x="15.0" y="985.0" width="258.0" height="29.8" fill="#000000" rx="4.5" fill-opacity="0.56"/>
<rect x="283.0" y="985.0" width="83.0" height="29.8" fill="#000000" rx="4.5" fill-opacity="0.56"/>
<text x="22.5" y="1005.4" fill="#ffffff" style="font-size:14.8px;" textLength="243.1" lengthAdjust="spacing">Микола Володимирович Замковий</text>
<path d="M343.8 992.5 v14.5 M336.5 999.7 h14.5" fill="none" stroke="#ffffff" stroke-width="1.2"/>
<path d="M69.5 834.5 v13 l3 -2.8 l2.3 5 l2 -0.9 l-2.3 -4.9 h4.2 z" fill="#ffffff" stroke="#222" stroke-width="0.9"/>
</g>
</svg>
</body></html>
